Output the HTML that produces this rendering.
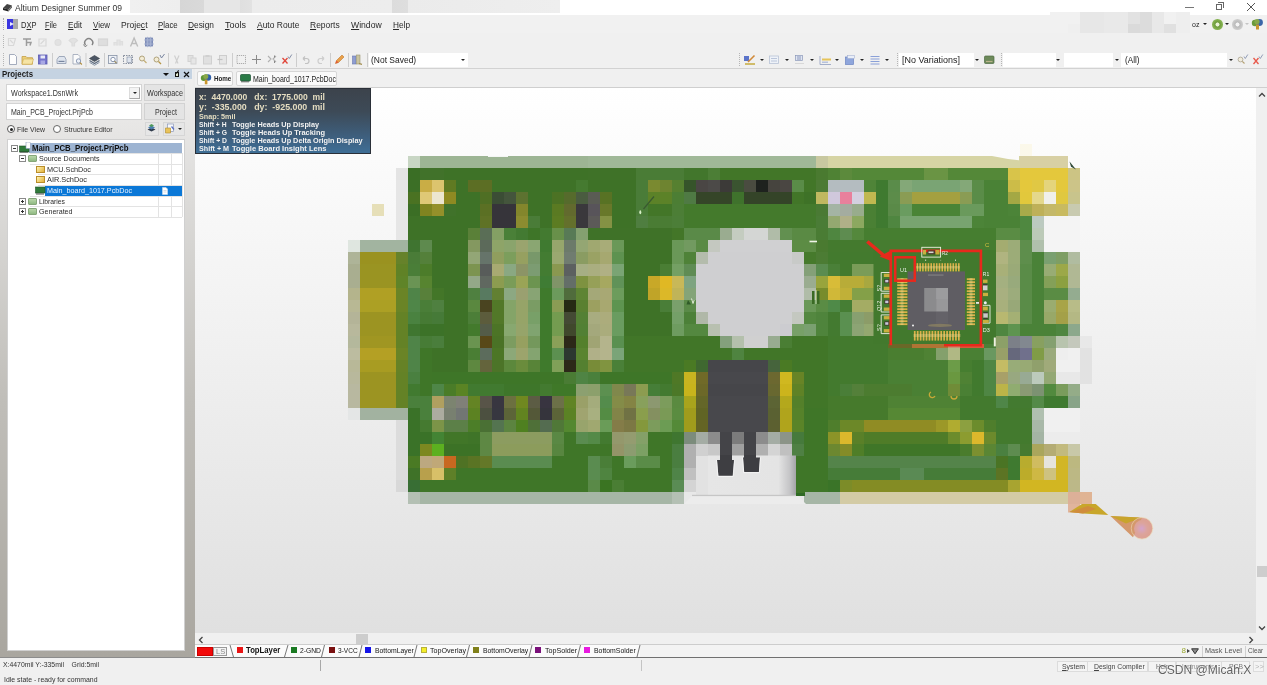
<!DOCTYPE html>
<html><head><meta charset="utf-8">
<style>
*{box-sizing:border-box;margin:0;padding:0}
html,body{width:1267px;height:685px;overflow:hidden;background:#f0f0f0;font-family:"Liberation Sans",sans-serif;font-size:8px;color:#222}
.abs,.abs div,.abs span,.abs svg,.abs i{position:absolute}
span{transform-origin:0 50%}
span{white-space:nowrap;line-height:1}
body>.abs{will-change:transform}
#title{left:0;top:0;width:1267px;height:15px;background:#fff}
#menubar{left:0;top:15px;width:1267px;height:18px;background:#f1f1f1}
#menubar span{top:4.5px;font-size:9.4px;color:#2a2a2a}
#menubar u{text-decoration:underline;text-underline-offset:1px}
#tb1{left:0;top:33px;width:1267px;height:17px;background:#f0f0f0}
#tb2{left:0;top:50px;width:1267px;height:19px;background:#f0f0f0;border-bottom:1px solid #d2d2d2}
.sep{width:1px;height:14px;top:3px;background:#cfcfcf}
.grip{width:2px;height:13px;top:3px;border-left:1px dotted #b5b5b5}
.combo{background:#fff;height:14px;top:3px}
.dd{width:0;height:0;border-left:2px solid transparent;border-right:2px solid transparent;border-top:2.5px solid #222}
#panel{left:0;top:69px;width:195px;height:589px;background:linear-gradient(#f0f0f0 0%,#e9e8e7 8%,#dcdbd9 22%,#c0beb9 56%,#a9a69f 100%);border-bottom:1px solid #8c8c8c}
#phead{left:0;top:69px;width:192px;height:10px;background:#c5d3e2}
#psplit{left:193px;top:69px;width:2px;height:20px;background:#ececec}
.tbox{background:#fff;border:1px solid #d4d4d4;font-size:8.2px;color:#333}
.btn{background:#e4e4e4;border:1px solid #d2d2d2;font-size:8.2px;color:#333;text-align:center}
#tree{left:7px;top:139px;width:178px;height:512px;background:#fff;border:1px solid #d0d0d0}
#tree span{font-size:8px;color:#2b2b2b}
.hl{height:1px;background:#e3e3e3}
.vl{width:1px;background:#e3e3e3}
.pm{width:7px;height:7px;border:1px solid #8a8a8a;background:#fff}
.pm:before{content:"";position:absolute;left:1px;top:2px;width:3px;height:1px;background:#333}
.pm.plus:after{content:"";position:absolute;left:2px;top:1px;width:1px;height:3px;background:#333}
.fold{width:9px;height:7px;background:linear-gradient(#b9d7a9,#8fb982);border:1px solid #86a67a;border-radius:1px}
.sch{width:9px;height:7px;background:linear-gradient(135deg,#fff3b0,#e2b13a);border:1px solid #b98d2a}
#tabbar{left:195px;top:69px;width:1072px;height:19px;background:#f0f0f0;border-bottom:1px solid #cfcfcf}
.tab{top:2px;height:15px;background:#fafafa;border:1px solid #d6d6d6;border-radius:2px}
.tab span{top:3px;font-size:8.3px;color:#222}
#canvas{left:195px;top:88px;width:1061px;height:545px;background:linear-gradient(#ffffff,#e0e0e0);overflow:hidden}
#vscroll{left:1256px;top:88px;width:11px;height:545px;background:#f0f0f0}
#hscroll{left:195px;top:633px;width:1072px;height:12px;background:#f0f0f0}
#layers{left:195px;top:644px;width:1072px;height:14px;background:#f3f3f3;border-bottom:1px solid #707070;border-top:1px solid #cdcdcd}
#layers span{top:1.8px;font-size:7.9px;color:#151515}
#layers i{top:2px;width:6px;height:6px}
#layers b.s{top:0;width:5px;height:12px;}
#status{left:0;top:658px;width:1267px;height:27px;background:#f0f0f0}
#status span{font-size:8px;color:#333}
.sbtn{top:3px;height:11px;border:1px solid #dcdcdc;background:#f4f4f4}
#hud{left:195px;top:88px;width:176px;height:66px;background:linear-gradient(#3c434c 0%,#3d4a57 35%,#3e6283 80%,#3f6f96 100%);border:1px solid #2a3038}
#hud span{font-weight:bold}
.y1{color:#e4dcc0;font-size:8.7px}
.y2{color:#e4dcc0;font-size:6.4px}
.w{color:#f2f2f2;font-size:7.3px}
</style></head><body>
<!-- TITLE -->
<div id="title" class="abs">
 <svg style="left:2px;top:2px" width="11" height="11" viewBox="0 0 11 11"><path d="M1 6 L5 2 L10 3.5 L6.5 7.5Z" fill="#444"/><path d="M1 6 L6.5 7.5 L6.5 9.5 L1 8Z" fill="#222"/><path d="M6.5 7.5 L10 3.5 L10 5.5 L6.5 9.5Z" fill="#666"/></svg>
 <span style="left:15px;top:3px;font-size:9.6px;color:#333;transform:scaleX(0.8919)">Altium Designer Summer 09</span>
 <div style="left:130px;top:0;width:430px;height:13px;background:linear-gradient(90deg,#f0f0f0 0,#eeeeee 50px,#d6d6d6 50px,#d9d9d9 74px,#e6e6e6 74px,#e6e6e6 110px,#dfdfdf 110px,#e2e2e2 122px,#ececec 122px,#ededed 262px,#dcdcdc 262px,#dedede 278px,#ebebeb 278px,#eeeeee 430px)"></div>
 <div style="left:1185px;top:7px;width:9px;height:1px;background:#777"></div>
 <div style="left:1216px;top:4px;width:6px;height:6px;border:1px solid #666"></div>
 <div style="left:1218px;top:2px;width:6px;height:6px;border-top:1px solid #666;border-right:1px solid #666"></div>
 <svg style="left:1246px;top:2px" width="10" height="10" viewBox="0 0 10 10"><path d="M1 1L9 9M9 1L1 9" stroke="#555" stroke-width="1"/></svg>
</div>
<!-- MENUBAR -->
<div id="menubar" class="abs">
 <div style="left:3px;top:3px;width:2px;height:12px;border-left:1px dotted #aaa"></div>
 <div style="left:7px;top:4px;width:6px;height:10px;background:#3a35e0"></div>
 <div style="left:13px;top:4px;width:5px;height:10px;background:#a8a8a8"></div>
 <div style="left:10px;top:7px;width:0;height:0;border-left:4px solid #e8e8ff;border-top:2.5px solid transparent;border-bottom:2.5px solid transparent"></div>
 <span style="left:20.5px;transform:scaleX(0.8026)">D<u>X</u>P</span>
 <span style="left:44.5px;transform:scaleX(0.7934)"><u>F</u>ile</span>
 <span style="left:67.5px;transform:scaleX(0.8657)"><u>E</u>dit</span>
 <span style="left:92.8px;transform:scaleX(0.8428)"><u>V</u>iew</span>
 <span style="left:120.8px;transform:scaleX(0.9079)">Proje<u>c</u>t</span>
 <span style="left:157.8px;transform:scaleX(0.8394)"><u>P</u>lace</span>
 <span style="left:188.4px;transform:scaleX(0.8903)"><u>D</u>esign</span>
 <span style="left:225px;transform:scaleX(0.9593)"><u>T</u>ools</span>
 <span style="left:257px;transform:scaleX(0.9036)"><u>A</u>uto Route</span>
 <span style="left:310.3px;transform:scaleX(0.9043)"><u>R</u>eports</span>
 <span style="left:351.3px;transform:scaleX(0.9203)"><u>W</u>indow</span>
 <span style="left:392.8px;transform:scaleX(0.8810)"><u>H</u>elp</span>
 <!-- blurred patch -->
 <div style="left:1050px;top:-3px;width:140px;height:24px;background:#f1f1f1"></div>
 <div style="left:1068px;top:9px;width:12px;height:12px;background:#efefef"></div>
 <div style="left:1080px;top:-3px;width:24px;height:24px;background:#e7e7e7"></div>
 <div style="left:1104px;top:-3px;width:24px;height:24px;background:#e9e9e9"></div>
 <div style="left:1128px;top:-3px;width:12px;height:12px;background:#e2e2e2"></div>
 <div style="left:1128px;top:9px;width:12px;height:12px;background:#dadada"></div>
 <div style="left:1140px;top:-3px;width:12px;height:24px;background:#dcdcdc"></div>
 <div style="left:1152px;top:-3px;width:12px;height:24px;background:#e8e8e8"></div>
 <div style="left:1164px;top:9px;width:12px;height:12px;background:#e0e0e0"></div>
 <div style="left:1176px;top:-3px;width:14px;height:24px;background:#eeeeee"></div>
 <span style="left:1192px;top:6px;font-size:7px;color:#222">oz</span>
 <div class="dd" style="left:1203px;top:8px"></div>
 <div style="left:1212px;top:4px;width:10.5px;height:10.5px;border-radius:50%;background:radial-gradient(circle at 50% 50%,#e9f2d8 0 22%,#6d9a3a 30%,#8ab756 70%,#6c9440 100%)"></div>
 <div class="dd" style="left:1225px;top:8px"></div>
 <div style="left:1232px;top:4px;width:10.5px;height:10.5px;border-radius:50%;background:radial-gradient(circle at 50% 50%,#f4f4f4 0 22%,#b9b9b9 30%,#cfcfcf 70%,#b5b5b5 100%)"></div>
 <div class="dd" style="left:1245px;top:8px;border-top-color:#c4c4c4"></div>
 <svg style="left:1251px;top:3px" width="13" height="12" viewBox="0 0 13 12"><circle cx="4" cy="5" r="3.2" fill="#6a9a3a"/><circle cx="8.5" cy="4.5" r="3.4" fill="#3a66a8"/><circle cx="6" cy="3.6" r="2.6" fill="#86a84a"/><rect x="5" y="6.5" width="3" height="5" fill="#c9962e"/></svg>
</div>
<!-- TOOLBAR 1 -->
<div id="tb1" class="abs">
 <div class="grip" style="left:3px;top:2px"></div>
 <svg style="left:7px;top:3px" width="150" height="12" viewBox="0 0 150 12">
  <g fill="none" stroke="#d8d8d8" stroke-width="1.2">
   <path d="M1.5 2.5h7l-2 7h-5z M3 4l3 3"/>
   <path d="M16 3h8M19.5 3v7M20 6.5h4l-1 3" stroke="#9c9c9c" stroke-width="1.5"/>
   <path d="M32 3h7v7h-7z M33.5 8l4-4"/>
   <circle cx="51" cy="6.5" r="3" fill="#e2e2e2" stroke="#dedede"/>
   <path d="M62 4.5c2-3 7-3 8.5 0l-3 2.5v3h-2.500v-3z" fill="#e2e2e2" stroke="#dcdcdc"/>
   <path d="M78.500 9a4 4 0 1 1 6.500 0" stroke="#858585" stroke-width="1.500"/>
   <path d="M76.500 8.500l1.500 2.200 2.300-1.500" stroke="#858585" stroke-width="1"/>
   <rect x="91.500" y="3" width="9" height="6.500" fill="#dedede" stroke="#d6d6d6"/>
   <path d="M107 9.500v-3h3v3M110 9.500v-5.500h3v5.500M113 9.500v-4h2.500v4" fill="#e4e4e4" stroke="#dedede"/>
   <path d="M123.500 10.500l3.600-8.500 3.600 8.500M124.800 7.500h4.800" stroke="#bdbdbd" stroke-width="1.400"/>
  </g>
  <rect x="138.500" y="2" width="7" height="8" fill="#8f9dc4" stroke="#6e7fb0" stroke-width=".8"/>
  <path d="M137 4h10M137 8h10M140.500 .8v10.400M143.500 .8v10.400" stroke="#a7b2d2" stroke-width=".8"/>
 </svg>
</div>
<!-- TOOLBAR 2 -->
<div id="tb2" class="abs">
 <div class="grip" style="left:3px"></div>
 <svg style="left:0;top:0" width="370" height="18" viewBox="0 0 370 18">
  <!-- new -->
  <path d="M9.500 4.500h5l2 2v8h-7z" fill="#fdfdfd" stroke="#9aa3b5" stroke-width=".9"/>
  <!-- open -->
  <path d="M22 6.500h4l1 1.200h5.500v6.500h-10.500z" fill="#ecd07a" stroke="#c4a048" stroke-width=".8"/><path d="M23.500 9h10l-1.500 5.200h-10z" fill="#f6e4a4" stroke="#ccaa50" stroke-width=".6"/>
  <!-- save -->
  <rect x="38.500" y="5" width="8.500" height="9" fill="#7674cc" stroke="#5a5ab0" stroke-width=".8"/><rect x="40.500" y="5.500" width="4.500" height="3" fill="#e8eaf8"/><rect x="40.500" y="10.500" width="4.500" height="3.500" fill="#a8a8e4"/>
  <path d="M52.500 3v14M86 3v14M104.500 3v14M168.500 3v14M232.500 3v14M296.500 3v14M330.500 3v14M348.500 3v14M367.500 3v14" stroke="#cdcdcd" stroke-width="1"/>
  <!-- print -->
  <path d="M57 9.500l2-3h5.500l1.500 3v4h-9z" fill="#dfe5ee" stroke="#8c98ad" stroke-width=".8"/><rect x="58.500" y="10.800" width="6" height="1.200" fill="#7886a0"/>
  <!-- preview -->
  <path d="M73 4.500h5l2 2v7.500h-7z" fill="#fbfbfb" stroke="#9aa3b5" stroke-width=".8"/><circle cx="78.500" cy="11" r="2.200" fill="#e9eef6" stroke="#7a8aa8" stroke-width=".8"/><path d="M80 12.700l1.800 1.800" stroke="#b08a3a" stroke-width="1.200"/>
  <!-- layers -->
  <path d="M89.500 8.500l5-3 5 3-5 3z" fill="#4c5664" stroke="#2f3742" stroke-width=".6"/><path d="M89.500 10.500l5 3 5-3" fill="none" stroke="#5d6a7c" stroke-width="1.200"/><path d="M89.500 12.300l5 3 5-3" fill="none" stroke="#8794a6" stroke-width="1"/>
  <!-- zoom area icons -->
  <rect x="108.500" y="5.500" width="8.500" height="8" fill="#eef1f6" stroke="#8792a6" stroke-width=".8"/><circle cx="113" cy="9.500" r="2.200" fill="#fff" stroke="#6f7f9c" stroke-width=".8"/><path d="M114.500 11.200l2 2" stroke="#8c7a4a" stroke-width="1.100"/>
  <rect x="123.500" y="5.500" width="9" height="8" fill="none" stroke="#707a8c" stroke-width=".8" stroke-dasharray="1.500 1"/><rect x="127" y="7" width="4.500" height="5.500" fill="#dfe5ee" stroke="#7f8aa0" stroke-width=".6"/>
  <circle cx="142" cy="8.500" r="2.500" fill="#f3ecd5" stroke="#a89a70" stroke-width=".9"/><path d="M144 10.500l2.500 2.500" stroke="#c4b078" stroke-width="1.300"/>
  <circle cx="156.500" cy="9.500" r="2.500" fill="#f3ecd5" stroke="#a89a70" stroke-width=".9"/><path d="M158.500 11.500l2.500 2.500" stroke="#b59645" stroke-width="1.300"/><path d="M160 5l1.500 3 3-4" fill="none" stroke="#7a86a0" stroke-width="1"/>
  <!-- greyed cut/copy/paste -->
  <path d="M174.500 5.500l3.500 8M179 5.500l-3.500 8" stroke="#cfcfcf" stroke-width="1.200"/>
  <rect x="188" y="5.500" width="5" height="6" fill="#e2e2e2" stroke="#d2d2d2"/><rect x="191" y="8" width="5" height="6" fill="#e6e6e6" stroke="#d2d2d2"/>
  <rect x="203.500" y="6" width="8" height="8" fill="#e0e0e0" stroke="#d0d0d0"/><rect x="205.500" y="5" width="4" height="2" fill="#d0d0d0"/>
  <rect x="219.500" y="5.500" width="7" height="8.500" fill="#e6e6e6" stroke="#cdcdcd"/><path d="M217.500 9.500h5" stroke="#c2c2c2" stroke-width="1.200"/>
  <!-- select rect -->
  <rect x="237" y="5.500" width="8.500" height="8" fill="none" stroke="#9a9a9a" stroke-width=".8" stroke-dasharray="1.200 .8"/>
  <path d="M256.500 5v9M252 9.500h9" stroke="#8a8a8a" stroke-width="1"/>
  <path d="M268 6l3 3-3 3M276 6l-3 3 3 3" fill="none" stroke="#b0b0b0" stroke-width="1.100"/><path d="M274.500 5.500v2M274.500 11v2" stroke="#888" stroke-width="1"/>
  <path d="M282.500 8l5 5.500M287.500 8l-5 5.500" stroke="#e0463a" stroke-width="1.300"/><path d="M288 6.500l1.300 2 2.500-4" fill="none" stroke="#7a86a0" stroke-width=".9"/>
  <!-- undo/redo -->
  <path d="M303 8.500h3.500a2 2 0 0 1 0 5h-1.500M303 8.500l2-2M303 8.500l2 2" fill="none" stroke="#c2c2c2" stroke-width="1.200"/>
  <path d="M324 8.500h-3.500a2 2 0 0 0 0 5h1.500M324 8.500l-2-2M324 8.500l-2 2" fill="none" stroke="#cdcdcd" stroke-width="1.200"/>
  <!-- pencil -->
  <path d="M335.500 13.500l1-3 5.500-5.500 2 2-5.500 5.500z" fill="#e8a04a" stroke="#c4782a" stroke-width=".6"/><path d="M335.500 13.500l1-3 2 2z" fill="#e05a3a"/>
  <!-- binocular/books -->
  <rect x="352.500" y="6" width="3.500" height="8" fill="#8f9dd0" stroke="#6a78b0" stroke-width=".6"/><rect x="356.500" y="5" width="3.500" height="9" fill="#c9c3a0" stroke="#9a946e" stroke-width=".6"/><path d="M359 13.500l3 .8" stroke="#a08a4a" stroke-width="1.200"/>
 </svg>
 <div class="combo" style="left:369px;width:99px"></div>
 <span style="left:370.8px;top:6px;font-size:8.6px;color:#222;transform:scaleX(0.9856)">(Not Saved)</span>
 <div class="dd" style="left:461px;top:9px"></div>
 <!-- right group -->
 <div class="grip" style="left:739px"></div>
 <svg style="left:740px;top:0" width="260" height="18" viewBox="0 0 260 18">
  <rect x="4" y="6" width="5" height="5" fill="#5b74c9"/><path d="M5 14h10" stroke="#c9b04a" stroke-width="1.600"/><path d="M8 12l6.500-6.500" stroke="#d08a3a" stroke-width="1.600"/>
  <rect x="29.500" y="6" width="9" height="7.500" fill="#eef2f8" stroke="#b8c3d6" stroke-width=".8"/><path d="M31 8.500h6M31 11h6" stroke="#b3bfd6" stroke-width=".9"/>
  <rect x="55.500" y="5.500" width="7" height="5" fill="#dfe5f2" stroke="#8a97b8" stroke-width=".7"/><path d="M57 7h4M57 9h4" stroke="#6c7aa6" stroke-width=".7"/><path d="M55 13.500h9" stroke="#d8d8d8" stroke-width="1"/>
  <path d="M80 6v8.500h11" fill="none" stroke="#9aa6c4" stroke-width=".9"/><rect x="82" y="8.500" width="9" height="2" fill="#e6c45a"/><rect x="82" y="11.500" width="6" height="1.500" fill="#b7c2dc"/>
  <rect x="105.500" y="7" width="8" height="7.500" fill="#8fa6dc" stroke="#6c84c0" stroke-width=".7"/><rect x="107.500" y="5.500" width="7" height="3" fill="#e9eef8" stroke="#9aa8cc" stroke-width=".5"/>
  <path d="M130.500 6.500h9M130.500 9h9M130.500 11.500h9M130.500 14h9" stroke="#8aa0d8" stroke-width="1.200"/>
  <rect x="244.500" y="6" width="9.500" height="7.500" rx="1" fill="#6d8a5a" stroke="#4e6a42" stroke-width=".7"/><path d="M246 11.500h6.500" stroke="#b9b38a" stroke-width="1.200"/>
 </svg>
 <div class="dd" style="left:760px;top:9px"></div>
 <div class="dd" style="left:784.500px;top:9px"></div>
 <div class="dd" style="left:810px;top:9px"></div>
 <div class="dd" style="left:835px;top:9px"></div>
 <div class="dd" style="left:860px;top:9px"></div>
 <div class="dd" style="left:885.300px;top:9px"></div>
 <div class="grip" style="left:896.500px"></div>
 <div class="combo" style="left:898.500px;width:75px"></div>
 <span style="left:901.500px;top:6px;font-size:8.600px;color:#222;transform:scaleX(1.0407)">[No Variations]</span>
 <div class="dd" style="left:974.700px;top:9px"></div>
 <div class="grip" style="left:1001px"></div>
 <div class="combo" style="left:1003px;width:53px"></div>
 <div class="dd" style="left:1056px;top:9px"></div>
 <div class="combo" style="left:1064px;width:49px"></div>
 <div class="dd" style="left:1115.200px;top:9px"></div>
 <div class="combo" style="left:1121px;width:106px"></div>
 <span style="left:1124.500px;top:6px;font-size:8.600px;color:#222;transform:scaleX(0.9489)">(All)</span>
 <div class="dd" style="left:1228.500px;top:9px"></div>
 <svg style="left:1236px;top:2px" width="30" height="15" viewBox="0 0 30 15"><circle cx="4.500" cy="7.500" r="2.400" fill="#f1ecdc" stroke="#a9a290" stroke-width=".8"/><path d="M6.300 9.300l2.200 2.200" stroke="#b3a070" stroke-width="1.100"/><path d="M8 4.500l1.300 2 2.500-4" fill="none" stroke="#8894b0" stroke-width=".9"/>
 <path d="M17.500 6l5 6M22.500 6l-5 6" stroke="#e8584a" stroke-width="1.300"/><path d="M23 4.500l1.300 2 2.500-4" fill="none" stroke="#8894b0" stroke-width=".9"/></svg>
</div>
<!-- PANEL -->
<div id="panel" class="abs"></div>
<div id="psplit" class="abs"></div>
<div id="phead" class="abs">
 <span style="left:1.500px;top:1px;font-size:8.600px;font-weight:bold;color:#1c1c1c;transform:scaleX(0.9139)">Projects</span>
 <div class="dd" style="left:163px;top:3.500px;border-left-width:3px;border-right-width:3px;border-top-width:3.500px;border-top-color:#111"></div>
 <div style="left:174.500px;top:2.500px;width:4.500px;height:5px;border:1px solid #111;background:#dfe8cf"></div><div style="left:177px;top:1px;width:1px;height:4px;background:#111;transform:rotate(35deg)"></div>
 <svg style="left:183px;top:1.500px" width="7" height="7" viewBox="0 0 7 7"><path d="M1 1l5 5M6 1l-5 5" stroke="#111" stroke-width="1.200"/></svg>
</div>
<div class="abs tbox" style="left:6px;top:84px;width:136px;height:17px"><span style="left:3.500px;top:4.500px;transform:scaleX(0.8747)">Workspace1.DsnWrk</span>
 <div style="left:122px;top:2px;width:11px;height:12px;background:#f4f4f4;border:1px solid #dcdcdc;border-right-color:#a8a8a8;border-bottom-color:#a8a8a8"></div><div class="dd" style="left:126px;top:7px"></div></div>
<div class="abs btn" style="left:144px;top:84px;width:41px;height:17px"><span style="left:2px;top:4.500px;transform:scaleX(0.8821)">Workspace</span></div>
<div class="abs tbox" style="left:6px;top:103px;width:136px;height:17px"><span style="left:4px;top:4.500px;transform:scaleX(0.8581)">Main_PCB_Project.PrjPcb</span></div>
<div class="abs btn" style="left:144px;top:103px;width:41px;height:17px"><span style="left:9.500px;top:4.500px;transform:scaleX(0.8633)">Project</span></div>
<div class="abs" style="left:0;top:122px;width:192px;height:14px">
 <div style="left:7px;top:3px;width:8px;height:8px;border-radius:50%;border:1px solid #555;background:#fff"></div><div style="left:9.500px;top:5.500px;width:3px;height:3px;border-radius:50%;background:#222"></div>
 <span style="left:17px;top:3.500px;font-size:8px;color:#333;transform:scaleX(0.8665)">File View</span>
 <div style="left:52.500px;top:3px;width:8px;height:8px;border-radius:50%;border:1px solid #666;background:#fff"></div>
 <span style="left:63.500px;top:3.500px;font-size:8px;color:#333;transform:scaleX(0.8726)">Structure Editor</span>
 <div style="left:144.500px;top:0;width:14px;height:13.500px;background:#e6e6e6;border:1px solid #d6d6d6"></div>
 <svg style="left:146px;top:1px" width="11" height="11" viewBox="0 0 11 11"><path d="M1.500 6.500l4-2 4 2-4 2z" fill="#2f3a4a"/><path d="M2 4.500l3.500-2 3.500 2-3.500 2z" fill="#4a7fb0"/><path d="M3 2.500l2.500-1.500 2.500 1.500-2.500 1.500z" fill="#4f9a5a"/></svg>
 <div style="left:162.500px;top:0;width:22px;height:13.500px;background:#e6e6e6;border:1px solid #d6d6d6"></div>
 <svg style="left:164px;top:1px" width="12" height="11" viewBox="0 0 12 11"><rect x="3.500" y="1" width="6" height="7.500" fill="#f6f8fc" stroke="#8c98b8" stroke-width=".7"/><path d="M1.500 5h5v5h-5z" fill="#e9c35a" stroke="#b08a2c" stroke-width=".6"/><path d="M7.500 3.500l2.500 3" stroke="#5a70c0" stroke-width="1.200"/></svg>
 <div class="dd" style="left:177.500px;top:5.500px"></div>
</div>
<div id="tree" class="abs">
 <!-- coordinates relative to tree (abs x-8, y-140) -->
 <div style="left:20.500px;top:3px;width:153.500px;height:10px;background:#9db4d2"></div>
 <div style="left:37px;top:45px;width:137px;height:10.500px;background:#0b78d7"></div>
 <div class="hl" style="left:22px;top:13px;width:152px"></div>
 <div class="hl" style="left:22px;top:23.500px;width:152px"></div>
 <div class="hl" style="left:30px;top:34px;width:144px"></div>
 <div class="hl" style="left:30px;top:44.500px;width:144px"></div>
 <div class="hl" style="left:22px;top:55.500px;width:152px"></div>
 <div class="hl" style="left:22px;top:66px;width:152px"></div>
 <div class="hl" style="left:22px;top:76.500px;width:152px"></div>
 <div class="vl" style="left:150px;top:13px;height:32px"></div><div class="vl" style="left:150px;top:55.500px;height:21px"></div>
 <div class="vl" style="left:162.500px;top:13px;height:32px"></div><div class="vl" style="left:162.500px;top:55.500px;height:21px"></div>
 <div class="vl" style="left:173.500px;top:13px;height:64px"></div>
 <div class="pm" style="left:2.500px;top:4.500px"></div>
 <div class="pm" style="left:11px;top:15px"></div>
 <div class="pm plus" style="left:11px;top:57.500px"></div>
 <div class="pm plus" style="left:11px;top:68px"></div>
 <svg style="left:10.500px;top:2px" width="12" height="12" viewBox="0 0 12 12"><rect x=".5" y="4" width="9.500" height="6" fill="#2f7a3a" stroke="#1f5628" stroke-width=".6"/><path d="M2 9.500v1.500M4 9.500v1.500M6 9.500v1.500M8 9.500v1.500" stroke="#222" stroke-width=".8"/><path d="M7 0h3.500l1 1v5.500h-4.500z" fill="#fff" stroke="#8898b8" stroke-width=".6"/></svg>
 <div class="fold" style="left:19.500px;top:15px"></div>
 <div class="fold" style="left:19.500px;top:57.500px"></div>
 <div class="fold" style="left:19.500px;top:68px"></div>
 <div class="sch" style="left:27.500px;top:25.500px"></div>
 <div class="sch" style="left:27.500px;top:36px"></div>
 <svg style="left:26.500px;top:45.500px" width="11" height="10" viewBox="0 0 11 10"><rect x=".5" y="1" width="9.500" height="6" fill="#2f7a3a" stroke="#1f5628" stroke-width=".6"/><path d="M2 7v2M4 7v2M6 7v2M8 7v2" stroke="#222" stroke-width=".8"/></svg>
 <span style="left:23.500px;top:4.800px;font-weight:bold;color:#111;font-size:8.200px;transform:scaleX(0.9553)">Main_PCB_Project.PrjPcb</span>
 <span style="left:31px;top:15px;transform:scaleX(0.8893)">Source Documents</span>
 <span style="left:39px;top:25.500px;transform:scaleX(0.9081)">MCU.SchDoc</span>
 <span style="left:39px;top:36px;transform:scaleX(0.9179)">AIR.SchDoc</span>
 <span style="left:39px;top:46.500px;color:#eaf3ff;transform:scaleX(0.8972)">Main_board_1017.PcbDoc</span>
 <span style="left:31px;top:57.500px;transform:scaleX(0.8473)">Libraries</span>
 <span style="left:31px;top:68px;transform:scaleX(0.8860)">Generated</span>
 <svg style="left:153.500px;top:46.500px" width="6" height="8" viewBox="0 0 6 8"><path d="M.5 .5h3.500l1.500 1.500v5.500h-5z" fill="#fff" stroke="#c8dcf0" stroke-width=".6"/><path d="M1.500 3.500h3M1.500 5h3" stroke="#b8c4d0" stroke-width=".6"/></svg>
</div>
<!-- TABBAR -->
<div id="tabbar" class="abs">
 <div class="tab" style="left:2px;width:36px">
  <svg style="left:2px;top:1px" width="12" height="12" viewBox="0 0 12 12"><circle cx="3.800" cy="5" r="3" fill="#5f9634"/><circle cx="8" cy="4.500" r="3.200" fill="#2f5fa8"/><circle cx="5.800" cy="3.400" r="2.500" fill="#8aa84a"/><rect x="4.800" y="6.500" width="2.600" height="4.800" fill="#c9962e"/></svg>
  <span style="left:15.500px;color:#222;font-weight:bold;font-size:7.800px;transform:scaleX(0.7983)">Home</span></div>
 <div class="tab" style="left:41px;width:100.500px">
  <svg style="left:2.500px;top:2px" width="12" height="10" viewBox="0 0 12 10"><rect x=".5" y=".5" width="10" height="6.500" rx="1" fill="#2a7a46" stroke="#175030" stroke-width=".7"/><path d="M2 7v1.500M4 7v1.500M6 7v1.500M8 7v1.500" stroke="#222" stroke-width=".8"/></svg>
  <span style="left:16px;transform:scaleX(0.8448)">Main_board_1017.PcbDoc</span></div>
</div>
<div id="canvas" class="abs">
<svg style="left:0;top:0" width="1061" height="545" viewBox="195 88 1061 545" shape-rendering="crispEdges">
<rect x="408" y="156" width="12" height="12" fill="#c8d6c4"/>
<rect x="420" y="156" width="168" height="12" fill="#9db594"/>
<rect x="588" y="156" width="228" height="12" fill="#a0b898"/>
<rect x="816" y="156" width="12" height="12" fill="#c8c8a0"/>
<rect x="828" y="156" width="192" height="12" fill="#d6d4a4"/>
<rect x="1020" y="156" width="48" height="12" fill="#d8d0a4"/>
<rect x="396" y="168" width="12" height="12" fill="#e4e4e4"/>
<rect x="408" y="168" width="12" height="12" fill="#3a6e25"/>
<rect x="420" y="168" width="24" height="12" fill="#41722a"/>
<rect x="444" y="168" width="144" height="12" fill="#3e7227"/>
<rect x="588" y="168" width="48" height="12" fill="#3f7228"/>
<rect x="636" y="168" width="48" height="12" fill="#4a7c36"/>
<rect x="684" y="168" width="24" height="12" fill="#42762c"/>
<rect x="708" y="168" width="12" height="12" fill="#4c7e36"/>
<rect x="720" y="168" width="96" height="12" fill="#427628"/>
<rect x="816" y="168" width="12" height="12" fill="#4a7a30"/>
<rect x="828" y="168" width="12" height="12" fill="#4f8234"/>
<rect x="840" y="168" width="12" height="12" fill="#5c8a3c"/>
<rect x="852" y="168" width="72" height="12" fill="#548838"/>
<rect x="924" y="168" width="24" height="12" fill="#6a9444"/>
<rect x="948" y="168" width="60" height="12" fill="#548838"/>
<rect x="1008" y="168" width="12" height="12" fill="#d8c44a"/>
<rect x="1020" y="168" width="48" height="12" fill="#e4c83c"/>
<rect x="1068" y="168" width="12" height="12" fill="#ccc484"/>
<rect x="396" y="180" width="12" height="12" fill="#e6e6e6"/>
<rect x="408" y="180" width="12" height="12" fill="#3c6f26"/>
<rect x="420" y="180" width="12" height="12" fill="#c9ad45"/>
<rect x="432" y="180" width="12" height="12" fill="#dcc46e"/>
<rect x="444" y="180" width="12" height="12" fill="#5f7a22"/>
<rect x="456" y="180" width="12" height="12" fill="#3e7227"/>
<rect x="468" y="180" width="24" height="12" fill="#5c6e24"/>
<rect x="492" y="180" width="84" height="12" fill="#3e7227"/>
<rect x="576" y="180" width="12" height="12" fill="#457a30"/>
<rect x="588" y="180" width="48" height="12" fill="#3e7227"/>
<rect x="636" y="180" width="12" height="12" fill="#4a7c38"/>
<rect x="648" y="180" width="12" height="12" fill="#7a8a30"/>
<rect x="660" y="180" width="12" height="12" fill="#6e8430"/>
<rect x="672" y="180" width="12" height="12" fill="#568030"/>
<rect x="684" y="180" width="12" height="12" fill="#36542a"/>
<rect x="696" y="180" width="12" height="12" fill="#4a4644"/>
<rect x="708" y="180" width="12" height="12" fill="#4c4a48"/>
<rect x="720" y="180" width="12" height="12" fill="#3c3a38"/>
<rect x="732" y="180" width="12" height="12" fill="#3a5430"/>
<rect x="744" y="180" width="12" height="12" fill="#4a4c40"/>
<rect x="756" y="180" width="12" height="12" fill="#1e221e"/>
<rect x="768" y="180" width="12" height="12" fill="#46443e"/>
<rect x="780" y="180" width="12" height="12" fill="#4a4642"/>
<rect x="792" y="180" width="12" height="12" fill="#5a8c48"/>
<rect x="804" y="180" width="12" height="12" fill="#427628"/>
<rect x="816" y="180" width="12" height="12" fill="#4c7a34"/>
<rect x="828" y="180" width="36" height="12" fill="#b4bcc0"/>
<rect x="864" y="180" width="12" height="12" fill="#4f8438"/>
<rect x="876" y="180" width="12" height="12" fill="#3f7a30"/>
<rect x="888" y="180" width="12" height="12" fill="#5a8c4a"/>
<rect x="900" y="180" width="12" height="12" fill="#84a878"/>
<rect x="912" y="180" width="48" height="12" fill="#7aa474"/>
<rect x="960" y="180" width="12" height="12" fill="#84a878"/>
<rect x="972" y="180" width="12" height="12" fill="#5a8c48"/>
<rect x="984" y="180" width="24" height="12" fill="#4a8236"/>
<rect x="1008" y="180" width="12" height="12" fill="#ccbc48"/>
<rect x="1020" y="180" width="12" height="12" fill="#e4c83c"/>
<rect x="1032" y="180" width="12" height="12" fill="#e0c844"/>
<rect x="1044" y="180" width="12" height="12" fill="#e4d47c"/>
<rect x="1056" y="180" width="12" height="12" fill="#e4c83c"/>
<rect x="1068" y="180" width="12" height="12" fill="#ccc488"/>
<rect x="396" y="192" width="12" height="12" fill="#e6e6e6"/>
<rect x="408" y="192" width="12" height="12" fill="#4a7222"/>
<rect x="420" y="192" width="12" height="12" fill="#dfc876"/>
<rect x="432" y="192" width="12" height="12" fill="#ece6d0"/>
<rect x="444" y="192" width="12" height="12" fill="#8e8a22"/>
<rect x="456" y="192" width="24" height="12" fill="#3e7227"/>
<rect x="480" y="192" width="12" height="12" fill="#4f6f24"/>
<rect x="492" y="192" width="12" height="12" fill="#3b4d35"/>
<rect x="504" y="192" width="12" height="12" fill="#44553c"/>
<rect x="516" y="192" width="12" height="12" fill="#5d7230"/>
<rect x="528" y="192" width="24" height="12" fill="#3e7227"/>
<rect x="552" y="192" width="12" height="12" fill="#4c7224"/>
<rect x="564" y="192" width="12" height="12" fill="#566b2c"/>
<rect x="576" y="192" width="12" height="12" fill="#4a5c40"/>
<rect x="588" y="192" width="12" height="12" fill="#5a5c54"/>
<rect x="600" y="192" width="12" height="12" fill="#587224"/>
<rect x="612" y="192" width="24" height="12" fill="#3e7227"/>
<rect x="636" y="192" width="12" height="12" fill="#4a7c38"/>
<rect x="648" y="192" width="24" height="12" fill="#5c8228"/>
<rect x="672" y="192" width="12" height="12" fill="#4c7e34"/>
<rect x="684" y="192" width="12" height="12" fill="#4f7a44"/>
<rect x="696" y="192" width="36" height="12" fill="#354528"/>
<rect x="732" y="192" width="12" height="12" fill="#3f722c"/>
<rect x="744" y="192" width="48" height="12" fill="#344428"/>
<rect x="792" y="192" width="12" height="12" fill="#427628"/>
<rect x="804" y="192" width="12" height="12" fill="#3e7227"/>
<rect x="816" y="192" width="12" height="12" fill="#c0b860"/>
<rect x="828" y="192" width="12" height="12" fill="#d0c8dc"/>
<rect x="840" y="192" width="12" height="12" fill="#e8809c"/>
<rect x="852" y="192" width="12" height="12" fill="#d4d0e0"/>
<rect x="864" y="192" width="12" height="12" fill="#c0b850"/>
<rect x="876" y="192" width="12" height="12" fill="#3f7a30"/>
<rect x="888" y="192" width="12" height="12" fill="#5c8c4a"/>
<rect x="900" y="192" width="12" height="12" fill="#8a9c54"/>
<rect x="912" y="192" width="48" height="12" fill="#a4a040"/>
<rect x="960" y="192" width="12" height="12" fill="#8a9c54"/>
<rect x="972" y="192" width="12" height="12" fill="#5a8c48"/>
<rect x="984" y="192" width="24" height="12" fill="#4a8236"/>
<rect x="1008" y="192" width="12" height="12" fill="#a4a844"/>
<rect x="1020" y="192" width="12" height="12" fill="#e2c83c"/>
<rect x="1032" y="192" width="12" height="12" fill="#e4d88c"/>
<rect x="1044" y="192" width="12" height="12" fill="#f0f0ec"/>
<rect x="1056" y="192" width="12" height="12" fill="#e0c840"/>
<rect x="1068" y="192" width="12" height="12" fill="#c8c48c"/>
<rect x="372" y="204" width="12" height="12" fill="#e6dfb8"/>
<rect x="396" y="204" width="12" height="12" fill="#e6e6e6"/>
<rect x="408" y="204" width="12" height="12" fill="#3b6e25"/>
<rect x="420" y="204" width="12" height="12" fill="#7f8420"/>
<rect x="432" y="204" width="12" height="12" fill="#94902a"/>
<rect x="444" y="204" width="12" height="12" fill="#40722a"/>
<rect x="456" y="204" width="24" height="12" fill="#3e7227"/>
<rect x="480" y="204" width="12" height="12" fill="#5b7024"/>
<rect x="492" y="204" width="24" height="12" fill="#36343a"/>
<rect x="516" y="204" width="12" height="12" fill="#83862c"/>
<rect x="528" y="204" width="24" height="12" fill="#3e7227"/>
<rect x="552" y="204" width="12" height="12" fill="#5a7a22"/>
<rect x="564" y="204" width="12" height="12" fill="#626a2e"/>
<rect x="576" y="204" width="12" height="12" fill="#3a383c"/>
<rect x="588" y="204" width="12" height="12" fill="#58545a"/>
<rect x="600" y="204" width="12" height="12" fill="#68782a"/>
<rect x="612" y="204" width="24" height="12" fill="#3e7227"/>
<rect x="636" y="204" width="12" height="12" fill="#4a7c38"/>
<rect x="648" y="204" width="24" height="12" fill="#437628"/>
<rect x="672" y="204" width="12" height="12" fill="#4c7e36"/>
<rect x="684" y="204" width="132" height="12" fill="#447a2c"/>
<rect x="816" y="204" width="12" height="12" fill="#4a7a34"/>
<rect x="828" y="204" width="12" height="12" fill="#a4b4a4"/>
<rect x="840" y="204" width="12" height="12" fill="#a4aca0"/>
<rect x="852" y="204" width="12" height="12" fill="#98ac8c"/>
<rect x="864" y="204" width="12" height="12" fill="#4a8034"/>
<rect x="876" y="204" width="12" height="12" fill="#3f7a30"/>
<rect x="888" y="204" width="12" height="12" fill="#5a8a48"/>
<rect x="900" y="204" width="12" height="12" fill="#6a9c60"/>
<rect x="912" y="204" width="48" height="12" fill="#4a8436"/>
<rect x="960" y="204" width="24" height="12" fill="#6a9a5c"/>
<rect x="984" y="204" width="24" height="12" fill="#4a8236"/>
<rect x="1008" y="204" width="12" height="12" fill="#4c8438"/>
<rect x="1020" y="204" width="12" height="12" fill="#a8aa4a"/>
<rect x="1032" y="204" width="12" height="12" fill="#beb058"/>
<rect x="1044" y="204" width="12" height="12" fill="#c4b868"/>
<rect x="1056" y="204" width="12" height="12" fill="#c8ba60"/>
<rect x="1068" y="204" width="12" height="12" fill="#c8cab0"/>
<rect x="396" y="216" width="12" height="12" fill="#e6e6e6"/>
<rect x="408" y="216" width="72" height="12" fill="#3e7227"/>
<rect x="480" y="216" width="12" height="12" fill="#5f7226"/>
<rect x="492" y="216" width="24" height="12" fill="#36343a"/>
<rect x="516" y="216" width="12" height="12" fill="#8c8c30"/>
<rect x="528" y="216" width="12" height="12" fill="#4a7c38"/>
<rect x="540" y="216" width="12" height="12" fill="#3e7227"/>
<rect x="552" y="216" width="12" height="12" fill="#5c7c22"/>
<rect x="564" y="216" width="12" height="12" fill="#64702c"/>
<rect x="576" y="216" width="12" height="12" fill="#3a383c"/>
<rect x="588" y="216" width="12" height="12" fill="#5c5a58"/>
<rect x="600" y="216" width="12" height="12" fill="#849244"/>
<rect x="612" y="216" width="24" height="12" fill="#3e7227"/>
<rect x="636" y="216" width="12" height="12" fill="#4f7e40"/>
<rect x="648" y="216" width="24" height="12" fill="#4a7c34"/>
<rect x="672" y="216" width="12" height="12" fill="#4c7e38"/>
<rect x="684" y="216" width="132" height="12" fill="#447a2c"/>
<rect x="816" y="216" width="12" height="12" fill="#4a7c36"/>
<rect x="828" y="216" width="12" height="12" fill="#94a870"/>
<rect x="840" y="216" width="12" height="12" fill="#b0b088"/>
<rect x="852" y="216" width="12" height="12" fill="#8ca860"/>
<rect x="864" y="216" width="12" height="12" fill="#4a8034"/>
<rect x="876" y="216" width="12" height="12" fill="#3f7a30"/>
<rect x="888" y="216" width="12" height="12" fill="#4f8640"/>
<rect x="900" y="216" width="72" height="12" fill="#78a470"/>
<rect x="972" y="216" width="12" height="12" fill="#4c8438"/>
<rect x="984" y="216" width="36" height="12" fill="#4a8236"/>
<rect x="1020" y="216" width="12" height="12" fill="#4f8840"/>
<rect x="1032" y="216" width="12" height="12" fill="#bccac0"/>
<rect x="1044" y="216" width="36" height="12" fill="#f4f4f4"/>
<rect x="396" y="228" width="12" height="12" fill="#e6e6e6"/>
<rect x="408" y="228" width="60" height="12" fill="#3e7227"/>
<rect x="468" y="228" width="12" height="12" fill="#5a8038"/>
<rect x="480" y="228" width="12" height="12" fill="#5a6e56"/>
<rect x="492" y="228" width="12" height="12" fill="#84a064"/>
<rect x="504" y="228" width="12" height="12" fill="#4a8038"/>
<rect x="516" y="228" width="12" height="12" fill="#437a32"/>
<rect x="528" y="228" width="12" height="12" fill="#3e7528"/>
<rect x="540" y="228" width="12" height="12" fill="#437a30"/>
<rect x="552" y="228" width="12" height="12" fill="#68904a"/>
<rect x="564" y="228" width="12" height="12" fill="#587a56"/>
<rect x="576" y="228" width="12" height="12" fill="#84a070"/>
<rect x="588" y="228" width="84" height="12" fill="#3f7228"/>
<rect x="672" y="228" width="12" height="12" fill="#437628"/>
<rect x="684" y="228" width="36" height="12" fill="#5a8a48"/>
<rect x="720" y="228" width="12" height="12" fill="#9aac90"/>
<rect x="732" y="228" width="12" height="12" fill="#c4ccc0"/>
<rect x="744" y="228" width="24" height="12" fill="#d4d6d4"/>
<rect x="768" y="228" width="12" height="12" fill="#b0bca8"/>
<rect x="780" y="228" width="12" height="12" fill="#629050"/>
<rect x="792" y="228" width="24" height="12" fill="#5a8a44"/>
<rect x="816" y="228" width="12" height="12" fill="#4a7c34"/>
<rect x="828" y="228" width="12" height="12" fill="#4f8640"/>
<rect x="840" y="228" width="12" height="12" fill="#5e8c50"/>
<rect x="852" y="228" width="12" height="12" fill="#54883c"/>
<rect x="864" y="228" width="132" height="12" fill="#467e30"/>
<rect x="996" y="228" width="24" height="12" fill="#5a8c44"/>
<rect x="1020" y="228" width="12" height="12" fill="#4f8840"/>
<rect x="1032" y="228" width="12" height="12" fill="#bccab8"/>
<rect x="1044" y="228" width="36" height="12" fill="#f4f4f4"/>
<rect x="348" y="240" width="12" height="12" fill="#dfe6e0"/>
<rect x="360" y="240" width="48" height="12" fill="#a2b4a0"/>
<rect x="408" y="240" width="12" height="12" fill="#3f7430"/>
<rect x="420" y="240" width="12" height="12" fill="#5e8a4e"/>
<rect x="432" y="240" width="36" height="12" fill="#3e7227"/>
<rect x="468" y="240" width="12" height="12" fill="#849860"/>
<rect x="480" y="240" width="12" height="12" fill="#5c6a5a"/>
<rect x="492" y="240" width="12" height="12" fill="#8ea468"/>
<rect x="504" y="240" width="12" height="12" fill="#8aa46c"/>
<rect x="516" y="240" width="12" height="12" fill="#9aa46e"/>
<rect x="528" y="240" width="12" height="12" fill="#8aa672"/>
<rect x="540" y="240" width="12" height="12" fill="#3f7a30"/>
<rect x="552" y="240" width="12" height="12" fill="#96a66c"/>
<rect x="564" y="240" width="12" height="12" fill="#6c7a6a"/>
<rect x="576" y="240" width="12" height="12" fill="#94a673"/>
<rect x="588" y="240" width="12" height="12" fill="#a0a870"/>
<rect x="600" y="240" width="12" height="12" fill="#a8ac78"/>
<rect x="612" y="240" width="12" height="12" fill="#6a9858"/>
<rect x="624" y="240" width="48" height="12" fill="#3e7227"/>
<rect x="672" y="240" width="12" height="12" fill="#6a9858"/>
<rect x="684" y="240" width="12" height="12" fill="#729a60"/>
<rect x="696" y="240" width="12" height="12" fill="#5a8a44"/>
<rect x="708" y="240" width="12" height="12" fill="#c4c8c0"/>
<rect x="720" y="240" width="72" height="12" fill="#d0d0d2"/>
<rect x="792" y="240" width="24" height="12" fill="#5c8c44"/>
<rect x="816" y="240" width="12" height="12" fill="#4a7a30"/>
<rect x="828" y="240" width="168" height="12" fill="#447a2e"/>
<rect x="996" y="240" width="12" height="12" fill="#a4ac70"/>
<rect x="1008" y="240" width="12" height="12" fill="#9cac78"/>
<rect x="1020" y="240" width="12" height="12" fill="#5e8e4c"/>
<rect x="1032" y="240" width="12" height="12" fill="#b0c0ac"/>
<rect x="1044" y="240" width="36" height="12" fill="#f4f4f4"/>
<rect x="348" y="252" width="12" height="12" fill="#aeb498"/>
<rect x="360" y="252" width="36" height="12" fill="#9a9220"/>
<rect x="396" y="252" width="12" height="12" fill="#66822a"/>
<rect x="408" y="252" width="12" height="12" fill="#4a7c38"/>
<rect x="420" y="252" width="12" height="12" fill="#54803a"/>
<rect x="432" y="252" width="36" height="12" fill="#3e7227"/>
<rect x="468" y="252" width="12" height="12" fill="#93a676"/>
<rect x="480" y="252" width="12" height="12" fill="#66746a"/>
<rect x="492" y="252" width="12" height="12" fill="#909e5e"/>
<rect x="504" y="252" width="12" height="12" fill="#7c9e5c"/>
<rect x="516" y="252" width="12" height="12" fill="#96a060"/>
<rect x="528" y="252" width="12" height="12" fill="#78986a"/>
<rect x="540" y="252" width="12" height="12" fill="#437c32"/>
<rect x="552" y="252" width="12" height="12" fill="#9aa870"/>
<rect x="564" y="252" width="12" height="12" fill="#707c70"/>
<rect x="576" y="252" width="12" height="12" fill="#8a9c62"/>
<rect x="588" y="252" width="12" height="12" fill="#9aa264"/>
<rect x="600" y="252" width="12" height="12" fill="#a6a870"/>
<rect x="612" y="252" width="12" height="12" fill="#5e9250"/>
<rect x="624" y="252" width="48" height="12" fill="#3e7227"/>
<rect x="672" y="252" width="12" height="12" fill="#6a9858"/>
<rect x="684" y="252" width="12" height="12" fill="#4f8238"/>
<rect x="696" y="252" width="12" height="12" fill="#b4bcac"/>
<rect x="708" y="252" width="84" height="12" fill="#cfcfd1"/>
<rect x="792" y="252" width="12" height="12" fill="#c8cac8"/>
<rect x="804" y="252" width="12" height="12" fill="#467a2c"/>
<rect x="816" y="252" width="12" height="12" fill="#4c7c34"/>
<rect x="828" y="252" width="48" height="12" fill="#437a2e"/>
<rect x="876" y="252" width="120" height="12" fill="#447a2e"/>
<rect x="996" y="252" width="12" height="12" fill="#b0b480"/>
<rect x="1008" y="252" width="12" height="12" fill="#9cac78"/>
<rect x="1020" y="252" width="12" height="12" fill="#5e8e4c"/>
<rect x="1032" y="252" width="12" height="12" fill="#4a8238"/>
<rect x="1044" y="252" width="12" height="12" fill="#7aa070"/>
<rect x="1056" y="252" width="12" height="12" fill="#7e9e64"/>
<rect x="1068" y="252" width="12" height="12" fill="#b0bca0"/>
<rect x="348" y="264" width="12" height="12" fill="#a9ae90"/>
<rect x="360" y="264" width="36" height="12" fill="#9a9422"/>
<rect x="396" y="264" width="12" height="12" fill="#608226"/>
<rect x="408" y="264" width="12" height="12" fill="#4a7e38"/>
<rect x="420" y="264" width="12" height="12" fill="#4c7c2a"/>
<rect x="432" y="264" width="36" height="12" fill="#3e7227"/>
<rect x="468" y="264" width="12" height="12" fill="#7c9450"/>
<rect x="480" y="264" width="12" height="12" fill="#585c5a"/>
<rect x="492" y="264" width="12" height="12" fill="#a8aa72"/>
<rect x="504" y="264" width="12" height="12" fill="#8aa882"/>
<rect x="516" y="264" width="12" height="12" fill="#8c9466"/>
<rect x="528" y="264" width="12" height="12" fill="#7c9c72"/>
<rect x="540" y="264" width="12" height="12" fill="#437c32"/>
<rect x="552" y="264" width="12" height="12" fill="#8a9850"/>
<rect x="564" y="264" width="12" height="12" fill="#5c6060"/>
<rect x="576" y="264" width="12" height="12" fill="#a6ae84"/>
<rect x="588" y="264" width="12" height="12" fill="#aaae80"/>
<rect x="600" y="264" width="12" height="12" fill="#b0b084"/>
<rect x="612" y="264" width="12" height="12" fill="#7aa474"/>
<rect x="624" y="264" width="36" height="12" fill="#3e7227"/>
<rect x="660" y="264" width="12" height="12" fill="#4a7e34"/>
<rect x="672" y="264" width="12" height="12" fill="#74a064"/>
<rect x="684" y="264" width="12" height="12" fill="#5f8c54"/>
<rect x="696" y="264" width="108" height="12" fill="#cfcfd1"/>
<rect x="804" y="264" width="12" height="12" fill="#84a078"/>
<rect x="816" y="264" width="12" height="12" fill="#5a8c50"/>
<rect x="828" y="264" width="12" height="12" fill="#4a8038"/>
<rect x="840" y="264" width="12" height="12" fill="#437a2e"/>
<rect x="852" y="264" width="24" height="12" fill="#7a9c58"/>
<rect x="876" y="264" width="120" height="12" fill="#447a2e"/>
<rect x="996" y="264" width="12" height="12" fill="#a8b078"/>
<rect x="1008" y="264" width="12" height="12" fill="#9aaa78"/>
<rect x="1020" y="264" width="12" height="12" fill="#5a8c48"/>
<rect x="1032" y="264" width="12" height="12" fill="#4a8238"/>
<rect x="1044" y="264" width="12" height="12" fill="#98ac74"/>
<rect x="1056" y="264" width="12" height="12" fill="#9ca848"/>
<rect x="1068" y="264" width="12" height="12" fill="#b0b894"/>
<rect x="348" y="276" width="12" height="12" fill="#a9ae90"/>
<rect x="360" y="276" width="36" height="12" fill="#9a9422"/>
<rect x="396" y="276" width="12" height="12" fill="#5f8428"/>
<rect x="408" y="276" width="12" height="12" fill="#6a9454"/>
<rect x="420" y="276" width="12" height="12" fill="#578430"/>
<rect x="432" y="276" width="36" height="12" fill="#3e7227"/>
<rect x="468" y="276" width="12" height="12" fill="#94a888"/>
<rect x="480" y="276" width="12" height="12" fill="#606860"/>
<rect x="492" y="276" width="12" height="12" fill="#8c9c50"/>
<rect x="504" y="276" width="12" height="12" fill="#7a9c58"/>
<rect x="516" y="276" width="12" height="12" fill="#9aa456"/>
<rect x="528" y="276" width="12" height="12" fill="#6c9450"/>
<rect x="540" y="276" width="12" height="12" fill="#3f7c34"/>
<rect x="552" y="276" width="12" height="12" fill="#809468"/>
<rect x="564" y="276" width="12" height="12" fill="#646e68"/>
<rect x="576" y="276" width="12" height="12" fill="#7e9240"/>
<rect x="588" y="276" width="12" height="12" fill="#96a058"/>
<rect x="600" y="276" width="12" height="12" fill="#a6a860"/>
<rect x="612" y="276" width="12" height="12" fill="#609258"/>
<rect x="624" y="276" width="24" height="12" fill="#3e7227"/>
<rect x="648" y="276" width="12" height="12" fill="#c8a828"/>
<rect x="660" y="276" width="12" height="12" fill="#e0b824"/>
<rect x="672" y="276" width="12" height="12" fill="#c8b858"/>
<rect x="684" y="276" width="12" height="12" fill="#7ea480"/>
<rect x="696" y="276" width="108" height="12" fill="#cfcfd1"/>
<rect x="804" y="276" width="12" height="12" fill="#9aac90"/>
<rect x="816" y="276" width="12" height="12" fill="#98a43c"/>
<rect x="828" y="276" width="12" height="12" fill="#d8bc38"/>
<rect x="840" y="276" width="24" height="12" fill="#b8ac38"/>
<rect x="864" y="276" width="12" height="12" fill="#a8a840"/>
<rect x="876" y="276" width="120" height="12" fill="#447a2e"/>
<rect x="996" y="276" width="12" height="12" fill="#a4b080"/>
<rect x="1008" y="276" width="12" height="12" fill="#98aa7c"/>
<rect x="1020" y="276" width="12" height="12" fill="#5a8c48"/>
<rect x="1032" y="276" width="12" height="12" fill="#4a8238"/>
<rect x="1044" y="276" width="12" height="12" fill="#84a058"/>
<rect x="1056" y="276" width="12" height="12" fill="#8ca040"/>
<rect x="1068" y="276" width="12" height="12" fill="#b0b894"/>
<rect x="348" y="288" width="12" height="12" fill="#b4b48c"/>
<rect x="360" y="288" width="36" height="12" fill="#b0a024"/>
<rect x="396" y="288" width="12" height="12" fill="#6a8426"/>
<rect x="408" y="288" width="12" height="12" fill="#4f8448"/>
<rect x="420" y="288" width="12" height="12" fill="#58803a"/>
<rect x="432" y="288" width="12" height="12" fill="#437628"/>
<rect x="444" y="288" width="24" height="12" fill="#3e7227"/>
<rect x="468" y="288" width="12" height="12" fill="#4f8040"/>
<rect x="480" y="288" width="12" height="12" fill="#587a60"/>
<rect x="492" y="288" width="12" height="12" fill="#628032"/>
<rect x="504" y="288" width="12" height="12" fill="#8ca882"/>
<rect x="516" y="288" width="12" height="12" fill="#9aa070"/>
<rect x="528" y="288" width="12" height="12" fill="#88a474"/>
<rect x="540" y="288" width="12" height="12" fill="#3f7a2c"/>
<rect x="552" y="288" width="12" height="12" fill="#6c9a5c"/>
<rect x="564" y="288" width="12" height="12" fill="#506c3c"/>
<rect x="576" y="288" width="12" height="12" fill="#5e8434"/>
<rect x="588" y="288" width="12" height="12" fill="#a4a878"/>
<rect x="600" y="288" width="12" height="12" fill="#a8a874"/>
<rect x="612" y="288" width="12" height="12" fill="#6c9c5c"/>
<rect x="624" y="288" width="24" height="12" fill="#3e7227"/>
<rect x="648" y="288" width="12" height="12" fill="#c0a428"/>
<rect x="660" y="288" width="12" height="12" fill="#dcb828"/>
<rect x="672" y="288" width="12" height="12" fill="#c0b458"/>
<rect x="684" y="288" width="12" height="12" fill="#84a478"/>
<rect x="696" y="288" width="108" height="12" fill="#cfcfd1"/>
<rect x="804" y="288" width="12" height="12" fill="#b0bca8"/>
<rect x="816" y="288" width="12" height="12" fill="#788c2c"/>
<rect x="828" y="288" width="12" height="12" fill="#d0b838"/>
<rect x="840" y="288" width="12" height="12" fill="#c0b038"/>
<rect x="852" y="288" width="24" height="12" fill="#84a048"/>
<rect x="876" y="288" width="120" height="12" fill="#447a2e"/>
<rect x="996" y="288" width="12" height="12" fill="#a8b080"/>
<rect x="1008" y="288" width="12" height="12" fill="#9cac7c"/>
<rect x="1020" y="288" width="12" height="12" fill="#5a8c48"/>
<rect x="1032" y="288" width="12" height="12" fill="#4a8238"/>
<rect x="1044" y="288" width="24" height="12" fill="#5a8c44"/>
<rect x="1068" y="288" width="12" height="12" fill="#94ac90"/>
<rect x="348" y="300" width="12" height="12" fill="#b8b894"/>
<rect x="360" y="300" width="36" height="12" fill="#aca024"/>
<rect x="396" y="300" width="12" height="12" fill="#6a8426"/>
<rect x="408" y="300" width="12" height="12" fill="#4f8648"/>
<rect x="420" y="300" width="12" height="12" fill="#4a7e38"/>
<rect x="432" y="300" width="12" height="12" fill="#4f8040"/>
<rect x="444" y="300" width="24" height="12" fill="#3e7227"/>
<rect x="468" y="300" width="12" height="12" fill="#5a883f"/>
<rect x="480" y="300" width="12" height="12" fill="#4a4420"/>
<rect x="492" y="300" width="12" height="12" fill="#527828"/>
<rect x="504" y="300" width="12" height="12" fill="#84a468"/>
<rect x="516" y="300" width="12" height="12" fill="#96a468"/>
<rect x="528" y="300" width="12" height="12" fill="#7a9c64"/>
<rect x="540" y="300" width="12" height="12" fill="#3f7a2c"/>
<rect x="552" y="300" width="12" height="12" fill="#8a9c54"/>
<rect x="564" y="300" width="12" height="12" fill="#262a14"/>
<rect x="576" y="300" width="12" height="12" fill="#5a8030"/>
<rect x="588" y="300" width="12" height="12" fill="#9ca060"/>
<rect x="600" y="300" width="12" height="12" fill="#a8a870"/>
<rect x="612" y="300" width="12" height="12" fill="#5e9450"/>
<rect x="624" y="300" width="36" height="12" fill="#3e7227"/>
<rect x="660" y="300" width="12" height="12" fill="#4a7e38"/>
<rect x="672" y="300" width="12" height="12" fill="#7aa06c"/>
<rect x="684" y="300" width="12" height="12" fill="#5a8a48"/>
<rect x="696" y="300" width="108" height="12" fill="#cfcfd1"/>
<rect x="804" y="300" width="12" height="12" fill="#6a9858"/>
<rect x="816" y="300" width="12" height="12" fill="#5a8c44"/>
<rect x="828" y="300" width="12" height="12" fill="#4f8a48"/>
<rect x="840" y="300" width="12" height="12" fill="#467e34"/>
<rect x="852" y="300" width="24" height="12" fill="#a4ac64"/>
<rect x="876" y="300" width="120" height="12" fill="#447a2e"/>
<rect x="996" y="300" width="12" height="12" fill="#a8b07c"/>
<rect x="1008" y="300" width="12" height="12" fill="#98a878"/>
<rect x="1020" y="300" width="12" height="12" fill="#5a8c48"/>
<rect x="1032" y="300" width="12" height="12" fill="#4a8238"/>
<rect x="1044" y="300" width="12" height="12" fill="#9aac70"/>
<rect x="1056" y="300" width="12" height="12" fill="#a8a448"/>
<rect x="1068" y="300" width="12" height="12" fill="#b8bc88"/>
<rect x="348" y="312" width="12" height="12" fill="#b4b498"/>
<rect x="360" y="312" width="36" height="12" fill="#9c9422"/>
<rect x="396" y="312" width="12" height="12" fill="#648226"/>
<rect x="408" y="312" width="12" height="12" fill="#4a8240"/>
<rect x="420" y="312" width="12" height="12" fill="#467a34"/>
<rect x="432" y="312" width="12" height="12" fill="#467a38"/>
<rect x="444" y="312" width="24" height="12" fill="#3e7227"/>
<rect x="468" y="312" width="12" height="12" fill="#4c7e38"/>
<rect x="480" y="312" width="12" height="12" fill="#5c5c3c"/>
<rect x="492" y="312" width="12" height="12" fill="#527828"/>
<rect x="504" y="312" width="12" height="12" fill="#84a468"/>
<rect x="516" y="312" width="12" height="12" fill="#96a468"/>
<rect x="528" y="312" width="12" height="12" fill="#78a068"/>
<rect x="540" y="312" width="12" height="12" fill="#3f7a2c"/>
<rect x="552" y="312" width="12" height="12" fill="#749c50"/>
<rect x="564" y="312" width="12" height="12" fill="#444a34"/>
<rect x="576" y="312" width="12" height="12" fill="#548034"/>
<rect x="588" y="312" width="12" height="12" fill="#a8ac80"/>
<rect x="600" y="312" width="12" height="12" fill="#acac7c"/>
<rect x="612" y="312" width="12" height="12" fill="#6a9c60"/>
<rect x="624" y="312" width="48" height="12" fill="#3e7227"/>
<rect x="672" y="312" width="12" height="12" fill="#74a068"/>
<rect x="684" y="312" width="12" height="12" fill="#4c8038"/>
<rect x="696" y="312" width="12" height="12" fill="#b0b8a8"/>
<rect x="708" y="312" width="84" height="12" fill="#cfcfd1"/>
<rect x="792" y="312" width="12" height="12" fill="#c4c8c0"/>
<rect x="804" y="312" width="12" height="12" fill="#548840"/>
<rect x="816" y="312" width="12" height="12" fill="#4f843c"/>
<rect x="828" y="312" width="12" height="12" fill="#437a30"/>
<rect x="840" y="312" width="12" height="12" fill="#5a9050"/>
<rect x="852" y="312" width="12" height="12" fill="#88a070"/>
<rect x="864" y="312" width="12" height="12" fill="#8c9c68"/>
<rect x="876" y="312" width="120" height="12" fill="#447a2e"/>
<rect x="996" y="312" width="12" height="12" fill="#b8b870"/>
<rect x="1008" y="312" width="12" height="12" fill="#a4b074"/>
<rect x="1020" y="312" width="12" height="12" fill="#5a8c48"/>
<rect x="1032" y="312" width="12" height="12" fill="#4a8238"/>
<rect x="1044" y="312" width="12" height="12" fill="#98a868"/>
<rect x="1056" y="312" width="12" height="12" fill="#a4a048"/>
<rect x="1068" y="312" width="12" height="12" fill="#b4b884"/>
<rect x="348" y="324" width="12" height="12" fill="#b8b89c"/>
<rect x="360" y="324" width="36" height="12" fill="#9c9422"/>
<rect x="396" y="324" width="12" height="12" fill="#648226"/>
<rect x="408" y="324" width="12" height="12" fill="#3f7630"/>
<rect x="420" y="324" width="24" height="12" fill="#3c7228"/>
<rect x="444" y="324" width="24" height="12" fill="#3e7227"/>
<rect x="468" y="324" width="12" height="12" fill="#437a2c"/>
<rect x="480" y="324" width="12" height="12" fill="#545c48"/>
<rect x="492" y="324" width="12" height="12" fill="#4c7426"/>
<rect x="504" y="324" width="12" height="12" fill="#88a870"/>
<rect x="516" y="324" width="12" height="12" fill="#96a46a"/>
<rect x="528" y="324" width="12" height="12" fill="#80a470"/>
<rect x="540" y="324" width="12" height="12" fill="#3f7a2c"/>
<rect x="552" y="324" width="12" height="12" fill="#749c50"/>
<rect x="564" y="324" width="12" height="12" fill="#40482c"/>
<rect x="576" y="324" width="12" height="12" fill="#528034"/>
<rect x="588" y="324" width="12" height="12" fill="#a4a87c"/>
<rect x="600" y="324" width="12" height="12" fill="#aaac7c"/>
<rect x="612" y="324" width="12" height="12" fill="#6a9c60"/>
<rect x="624" y="324" width="48" height="12" fill="#3e7227"/>
<rect x="672" y="324" width="12" height="12" fill="#6e9c60"/>
<rect x="684" y="324" width="24" height="12" fill="#548840"/>
<rect x="708" y="324" width="12" height="12" fill="#b8c0b0"/>
<rect x="720" y="324" width="60" height="12" fill="#cfcfd1"/>
<rect x="780" y="324" width="12" height="12" fill="#ccccd0"/>
<rect x="792" y="324" width="12" height="12" fill="#78a068"/>
<rect x="804" y="324" width="12" height="12" fill="#7aa070"/>
<rect x="816" y="324" width="12" height="12" fill="#4f843c"/>
<rect x="828" y="324" width="12" height="12" fill="#437a30"/>
<rect x="840" y="324" width="12" height="12" fill="#5a9050"/>
<rect x="852" y="324" width="12" height="12" fill="#8ca474"/>
<rect x="864" y="324" width="12" height="12" fill="#94a870"/>
<rect x="876" y="324" width="120" height="12" fill="#447a2e"/>
<rect x="996" y="324" width="12" height="12" fill="#4f8640"/>
<rect x="1008" y="324" width="12" height="12" fill="#5e9450"/>
<rect x="1020" y="324" width="36" height="12" fill="#4a8238"/>
<rect x="1056" y="324" width="12" height="12" fill="#4f8640"/>
<rect x="1068" y="324" width="12" height="12" fill="#8ca88c"/>
<rect x="348" y="336" width="12" height="12" fill="#b4b89c"/>
<rect x="360" y="336" width="36" height="12" fill="#a09622"/>
<rect x="396" y="336" width="12" height="12" fill="#648226"/>
<rect x="408" y="336" width="12" height="12" fill="#4f8448"/>
<rect x="420" y="336" width="12" height="12" fill="#477c36"/>
<rect x="432" y="336" width="12" height="12" fill="#4a7e3c"/>
<rect x="444" y="336" width="24" height="12" fill="#3e7227"/>
<rect x="468" y="336" width="12" height="12" fill="#6a9450"/>
<rect x="480" y="336" width="12" height="12" fill="#584818"/>
<rect x="492" y="336" width="12" height="12" fill="#4a7226"/>
<rect x="504" y="336" width="12" height="12" fill="#7c9c60"/>
<rect x="516" y="336" width="12" height="12" fill="#96a060"/>
<rect x="528" y="336" width="12" height="12" fill="#74985c"/>
<rect x="540" y="336" width="12" height="12" fill="#3f7a2c"/>
<rect x="552" y="336" width="12" height="12" fill="#8aa058"/>
<rect x="564" y="336" width="12" height="12" fill="#2c2818"/>
<rect x="576" y="336" width="12" height="12" fill="#54802c"/>
<rect x="588" y="336" width="12" height="12" fill="#a0a474"/>
<rect x="600" y="336" width="12" height="12" fill="#b4b48c"/>
<rect x="612" y="336" width="12" height="12" fill="#5a9050"/>
<rect x="624" y="336" width="96" height="12" fill="#417628"/>
<rect x="720" y="336" width="12" height="12" fill="#84a07c"/>
<rect x="732" y="336" width="12" height="12" fill="#b4c0ac"/>
<rect x="744" y="336" width="24" height="12" fill="#d0d0d0"/>
<rect x="768" y="336" width="12" height="12" fill="#98ac90"/>
<rect x="780" y="336" width="12" height="12" fill="#4a7e34"/>
<rect x="792" y="336" width="36" height="12" fill="#417628"/>
<rect x="828" y="336" width="48" height="12" fill="#437a2e"/>
<rect x="876" y="336" width="120" height="12" fill="#447a2e"/>
<rect x="996" y="336" width="12" height="12" fill="#8ca068"/>
<rect x="1008" y="336" width="12" height="12" fill="#7c8088"/>
<rect x="1020" y="336" width="12" height="12" fill="#828890"/>
<rect x="1032" y="336" width="12" height="12" fill="#88a060"/>
<rect x="1044" y="336" width="12" height="12" fill="#84a070"/>
<rect x="1056" y="336" width="12" height="12" fill="#b8c4ae"/>
<rect x="1068" y="336" width="12" height="12" fill="#c4c8bc"/>
<rect x="1080" y="336" width="12" height="12" fill="#e8e8e8"/>
<rect x="348" y="348" width="12" height="12" fill="#bcbca0"/>
<rect x="360" y="348" width="36" height="12" fill="#b4a024"/>
<rect x="396" y="348" width="12" height="12" fill="#6a8426"/>
<rect x="408" y="348" width="12" height="12" fill="#4f8448"/>
<rect x="420" y="348" width="12" height="12" fill="#3f7628"/>
<rect x="432" y="348" width="36" height="12" fill="#3e7227"/>
<rect x="468" y="348" width="12" height="12" fill="#4a7e34"/>
<rect x="480" y="348" width="12" height="12" fill="#5c6c5c"/>
<rect x="492" y="348" width="12" height="12" fill="#4c7626"/>
<rect x="504" y="348" width="12" height="12" fill="#8ca878"/>
<rect x="516" y="348" width="12" height="12" fill="#9ca46c"/>
<rect x="528" y="348" width="12" height="12" fill="#84a470"/>
<rect x="540" y="348" width="12" height="12" fill="#3f7a2c"/>
<rect x="552" y="348" width="12" height="12" fill="#5c9050"/>
<rect x="564" y="348" width="12" height="12" fill="#2c3830"/>
<rect x="576" y="348" width="12" height="12" fill="#5a8430"/>
<rect x="588" y="348" width="12" height="12" fill="#b0b088"/>
<rect x="600" y="348" width="12" height="12" fill="#b4b48c"/>
<rect x="612" y="348" width="12" height="12" fill="#7aa478"/>
<rect x="624" y="348" width="108" height="12" fill="#417628"/>
<rect x="732" y="348" width="12" height="12" fill="#4f8440"/>
<rect x="744" y="348" width="84" height="12" fill="#417628"/>
<rect x="828" y="348" width="60" height="12" fill="#437a2e"/>
<rect x="888" y="348" width="36" height="12" fill="#4a7e30"/>
<rect x="924" y="348" width="12" height="12" fill="#4f8234"/>
<rect x="936" y="348" width="12" height="12" fill="#84a06c"/>
<rect x="948" y="348" width="12" height="12" fill="#b0b884"/>
<rect x="960" y="348" width="24" height="12" fill="#4a8034"/>
<rect x="984" y="348" width="12" height="12" fill="#6a9860"/>
<rect x="996" y="348" width="12" height="12" fill="#98a068"/>
<rect x="1008" y="348" width="12" height="12" fill="#66687c"/>
<rect x="1020" y="348" width="12" height="12" fill="#70708c"/>
<rect x="1032" y="348" width="12" height="12" fill="#809c46"/>
<rect x="1044" y="348" width="12" height="12" fill="#9aaa7c"/>
<rect x="1056" y="348" width="12" height="12" fill="#eeeeee"/>
<rect x="1068" y="348" width="12" height="12" fill="#f0f0f0"/>
<rect x="1080" y="348" width="12" height="12" fill="#e2e2e2"/>
<rect x="348" y="360" width="12" height="12" fill="#b8b898"/>
<rect x="360" y="360" width="36" height="12" fill="#a89c22"/>
<rect x="396" y="360" width="12" height="12" fill="#668226"/>
<rect x="408" y="360" width="12" height="12" fill="#4f8448"/>
<rect x="420" y="360" width="12" height="12" fill="#3f7628"/>
<rect x="432" y="360" width="36" height="12" fill="#3e7227"/>
<rect x="468" y="360" width="12" height="12" fill="#5e8840"/>
<rect x="480" y="360" width="12" height="12" fill="#64643c"/>
<rect x="492" y="360" width="12" height="12" fill="#4c7428"/>
<rect x="504" y="360" width="12" height="12" fill="#5c883c"/>
<rect x="516" y="360" width="12" height="12" fill="#6a8c3c"/>
<rect x="528" y="360" width="12" height="12" fill="#588438"/>
<rect x="540" y="360" width="12" height="12" fill="#3f7a2c"/>
<rect x="552" y="360" width="12" height="12" fill="#80a058"/>
<rect x="564" y="360" width="12" height="12" fill="#2c2818"/>
<rect x="576" y="360" width="12" height="12" fill="#548030"/>
<rect x="588" y="360" width="12" height="12" fill="#788c38"/>
<rect x="600" y="360" width="12" height="12" fill="#809440"/>
<rect x="612" y="360" width="12" height="12" fill="#4a8038"/>
<rect x="624" y="360" width="60" height="12" fill="#417628"/>
<rect x="684" y="360" width="12" height="12" fill="#4a7a24"/>
<rect x="696" y="360" width="12" height="12" fill="#3f6830"/>
<rect x="708" y="360" width="60" height="12" fill="#46464a"/>
<rect x="768" y="360" width="12" height="12" fill="#46643c"/>
<rect x="780" y="360" width="12" height="12" fill="#4a7a24"/>
<rect x="792" y="360" width="36" height="12" fill="#417628"/>
<rect x="828" y="360" width="60" height="12" fill="#437a2e"/>
<rect x="888" y="360" width="60" height="12" fill="#4a8034"/>
<rect x="948" y="360" width="12" height="12" fill="#6c9c48"/>
<rect x="960" y="360" width="12" height="12" fill="#467e30"/>
<rect x="972" y="360" width="12" height="12" fill="#417a2e"/>
<rect x="984" y="360" width="12" height="12" fill="#4f8644"/>
<rect x="996" y="360" width="12" height="12" fill="#c4bc64"/>
<rect x="1008" y="360" width="12" height="12" fill="#98ac78"/>
<rect x="1020" y="360" width="12" height="12" fill="#98aa74"/>
<rect x="1032" y="360" width="12" height="12" fill="#90a06c"/>
<rect x="1044" y="360" width="12" height="12" fill="#a0aa7a"/>
<rect x="1056" y="360" width="24" height="12" fill="#f0f0f0"/>
<rect x="1080" y="360" width="12" height="12" fill="#e2e2e2"/>
<rect x="348" y="372" width="12" height="12" fill="#b8b89c"/>
<rect x="360" y="372" width="36" height="12" fill="#9c9422"/>
<rect x="396" y="372" width="12" height="12" fill="#648226"/>
<rect x="408" y="372" width="12" height="12" fill="#4a8040"/>
<rect x="420" y="372" width="12" height="12" fill="#3f7628"/>
<rect x="432" y="372" width="132" height="12" fill="#3e7628"/>
<rect x="564" y="372" width="12" height="12" fill="#4a7c34"/>
<rect x="576" y="372" width="12" height="12" fill="#4f8444"/>
<rect x="588" y="372" width="12" height="12" fill="#4a803c"/>
<rect x="600" y="372" width="72" height="12" fill="#3e7628"/>
<rect x="672" y="372" width="12" height="12" fill="#4f7826"/>
<rect x="684" y="372" width="12" height="12" fill="#c8b420"/>
<rect x="696" y="372" width="12" height="12" fill="#706a28"/>
<rect x="708" y="372" width="60" height="12" fill="#48484c"/>
<rect x="768" y="372" width="12" height="12" fill="#6c6830"/>
<rect x="780" y="372" width="12" height="12" fill="#d0b820"/>
<rect x="792" y="372" width="12" height="12" fill="#688426"/>
<rect x="804" y="372" width="24" height="12" fill="#417628"/>
<rect x="828" y="372" width="60" height="12" fill="#437a2e"/>
<rect x="888" y="372" width="60" height="12" fill="#4a8034"/>
<rect x="948" y="372" width="12" height="12" fill="#6a9840"/>
<rect x="960" y="372" width="12" height="12" fill="#4f8234"/>
<rect x="972" y="372" width="12" height="12" fill="#417a2e"/>
<rect x="984" y="372" width="12" height="12" fill="#4f8644"/>
<rect x="996" y="372" width="12" height="12" fill="#a8a068"/>
<rect x="1008" y="372" width="12" height="12" fill="#98a880"/>
<rect x="1020" y="372" width="12" height="12" fill="#98aa94"/>
<rect x="1032" y="372" width="12" height="12" fill="#bccabc"/>
<rect x="1044" y="372" width="12" height="12" fill="#94a874"/>
<rect x="1056" y="372" width="24" height="12" fill="#e8e8e8"/>
<rect x="1080" y="372" width="12" height="12" fill="#e2e2e2"/>
<rect x="348" y="384" width="12" height="12" fill="#b8b8a0"/>
<rect x="360" y="384" width="36" height="12" fill="#9c9422"/>
<rect x="396" y="384" width="12" height="12" fill="#648226"/>
<rect x="408" y="384" width="12" height="12" fill="#417a30"/>
<rect x="420" y="384" width="12" height="12" fill="#3f7628"/>
<rect x="432" y="384" width="12" height="12" fill="#4f8648"/>
<rect x="444" y="384" width="12" height="12" fill="#4a7c28"/>
<rect x="456" y="384" width="12" height="12" fill="#5a8424"/>
<rect x="468" y="384" width="36" height="12" fill="#417a30"/>
<rect x="504" y="384" width="36" height="12" fill="#3e762a"/>
<rect x="540" y="384" width="12" height="12" fill="#437a30"/>
<rect x="552" y="384" width="24" height="12" fill="#3f7828"/>
<rect x="576" y="384" width="12" height="12" fill="#8ca070"/>
<rect x="588" y="384" width="12" height="12" fill="#8ca06c"/>
<rect x="600" y="384" width="12" height="12" fill="#5c9050"/>
<rect x="612" y="384" width="12" height="12" fill="#80884c"/>
<rect x="624" y="384" width="12" height="12" fill="#787858"/>
<rect x="636" y="384" width="12" height="12" fill="#8c9c50"/>
<rect x="648" y="384" width="12" height="12" fill="#467e38"/>
<rect x="660" y="384" width="12" height="12" fill="#437a30"/>
<rect x="672" y="384" width="12" height="12" fill="#4c7828"/>
<rect x="684" y="384" width="12" height="12" fill="#c8b41c"/>
<rect x="696" y="384" width="12" height="12" fill="#6c6828"/>
<rect x="708" y="384" width="60" height="12" fill="#46464a"/>
<rect x="768" y="384" width="12" height="12" fill="#686830"/>
<rect x="780" y="384" width="12" height="12" fill="#ccb41c"/>
<rect x="792" y="384" width="12" height="12" fill="#5f8226"/>
<rect x="804" y="384" width="24" height="12" fill="#417628"/>
<rect x="828" y="384" width="12" height="12" fill="#437a2e"/>
<rect x="840" y="384" width="12" height="12" fill="#4a7e38"/>
<rect x="852" y="384" width="12" height="12" fill="#54803a"/>
<rect x="864" y="384" width="48" height="12" fill="#4c7c30"/>
<rect x="912" y="384" width="36" height="12" fill="#4a8034"/>
<rect x="948" y="384" width="12" height="12" fill="#708c38"/>
<rect x="960" y="384" width="12" height="12" fill="#4a8034"/>
<rect x="972" y="384" width="12" height="12" fill="#417a2e"/>
<rect x="984" y="384" width="12" height="12" fill="#4f8644"/>
<rect x="996" y="384" width="12" height="12" fill="#bcb448"/>
<rect x="1008" y="384" width="12" height="12" fill="#90ac70"/>
<rect x="1020" y="384" width="12" height="12" fill="#8a9a74"/>
<rect x="1032" y="384" width="12" height="12" fill="#7c9272"/>
<rect x="1044" y="384" width="12" height="12" fill="#528a3e"/>
<rect x="1056" y="384" width="12" height="12" fill="#7a9c5c"/>
<rect x="1068" y="384" width="12" height="12" fill="#94ac88"/>
<rect x="348" y="396" width="12" height="12" fill="#b8b8a0"/>
<rect x="360" y="396" width="36" height="12" fill="#9c9422"/>
<rect x="396" y="396" width="12" height="12" fill="#648226"/>
<rect x="408" y="396" width="24" height="12" fill="#4a803c"/>
<rect x="432" y="396" width="12" height="12" fill="#b0a060"/>
<rect x="444" y="396" width="12" height="12" fill="#7c8470"/>
<rect x="456" y="396" width="12" height="12" fill="#808078"/>
<rect x="468" y="396" width="12" height="12" fill="#648424"/>
<rect x="480" y="396" width="12" height="12" fill="#585448"/>
<rect x="492" y="396" width="12" height="12" fill="#383640"/>
<rect x="504" y="396" width="12" height="12" fill="#6c7040"/>
<rect x="516" y="396" width="12" height="12" fill="#708820"/>
<rect x="528" y="396" width="12" height="12" fill="#5c5c44"/>
<rect x="540" y="396" width="12" height="12" fill="#383440"/>
<rect x="552" y="396" width="12" height="12" fill="#6c7048"/>
<rect x="564" y="396" width="12" height="12" fill="#608424"/>
<rect x="576" y="396" width="12" height="12" fill="#9aa068"/>
<rect x="588" y="396" width="12" height="12" fill="#a4ac7c"/>
<rect x="600" y="396" width="12" height="12" fill="#548c4c"/>
<rect x="612" y="396" width="12" height="12" fill="#848c48"/>
<rect x="624" y="396" width="12" height="12" fill="#848444"/>
<rect x="636" y="396" width="12" height="12" fill="#88a05c"/>
<rect x="648" y="396" width="12" height="12" fill="#8c9870"/>
<rect x="660" y="396" width="12" height="12" fill="#7c9c5c"/>
<rect x="672" y="396" width="12" height="12" fill="#5a8a40"/>
<rect x="684" y="396" width="12" height="12" fill="#a8a41c"/>
<rect x="696" y="396" width="12" height="12" fill="#646628"/>
<rect x="708" y="396" width="60" height="12" fill="#48484c"/>
<rect x="768" y="396" width="12" height="12" fill="#5c6434"/>
<rect x="780" y="396" width="12" height="12" fill="#b4a81c"/>
<rect x="792" y="396" width="12" height="12" fill="#54802a"/>
<rect x="804" y="396" width="24" height="12" fill="#417628"/>
<rect x="828" y="396" width="60" height="12" fill="#467a2c"/>
<rect x="888" y="396" width="72" height="12" fill="#4f8234"/>
<rect x="960" y="396" width="36" height="12" fill="#437a2e"/>
<rect x="996" y="396" width="12" height="12" fill="#4f8648"/>
<rect x="1008" y="396" width="24" height="12" fill="#437a30"/>
<rect x="1032" y="396" width="12" height="12" fill="#548a48"/>
<rect x="1044" y="396" width="24" height="12" fill="#3f7a30"/>
<rect x="1068" y="396" width="12" height="12" fill="#88a488"/>
<rect x="348" y="408" width="12" height="12" fill="#e4e6e6"/>
<rect x="360" y="408" width="48" height="12" fill="#a2b2a0"/>
<rect x="408" y="408" width="12" height="12" fill="#3a7228"/>
<rect x="420" y="408" width="12" height="12" fill="#4a803c"/>
<rect x="432" y="408" width="12" height="12" fill="#acaca0"/>
<rect x="444" y="408" width="12" height="12" fill="#788070"/>
<rect x="456" y="408" width="12" height="12" fill="#727674"/>
<rect x="468" y="408" width="12" height="12" fill="#5c8222"/>
<rect x="480" y="408" width="12" height="12" fill="#4c5040"/>
<rect x="492" y="408" width="12" height="12" fill="#373740"/>
<rect x="504" y="408" width="12" height="12" fill="#5c6438"/>
<rect x="516" y="408" width="12" height="12" fill="#628420"/>
<rect x="528" y="408" width="12" height="12" fill="#545838"/>
<rect x="540" y="408" width="12" height="12" fill="#35343c"/>
<rect x="552" y="408" width="12" height="12" fill="#5c6438"/>
<rect x="564" y="408" width="12" height="12" fill="#5b8224"/>
<rect x="576" y="408" width="12" height="12" fill="#a0a470"/>
<rect x="588" y="408" width="12" height="12" fill="#a8b080"/>
<rect x="600" y="408" width="12" height="12" fill="#548c44"/>
<rect x="612" y="408" width="12" height="12" fill="#828448"/>
<rect x="624" y="408" width="12" height="12" fill="#707244"/>
<rect x="636" y="408" width="12" height="12" fill="#8a9e4c"/>
<rect x="648" y="408" width="12" height="12" fill="#849060"/>
<rect x="660" y="408" width="12" height="12" fill="#7a9a56"/>
<rect x="672" y="408" width="12" height="12" fill="#5a8c40"/>
<rect x="684" y="408" width="12" height="12" fill="#a09c1c"/>
<rect x="696" y="408" width="12" height="12" fill="#606424"/>
<rect x="708" y="408" width="60" height="12" fill="#48484c"/>
<rect x="768" y="408" width="12" height="12" fill="#5a6132"/>
<rect x="780" y="408" width="12" height="12" fill="#b0a41c"/>
<rect x="792" y="408" width="12" height="12" fill="#56822a"/>
<rect x="804" y="408" width="24" height="12" fill="#3f7628"/>
<rect x="828" y="408" width="60" height="12" fill="#467a2c"/>
<rect x="888" y="408" width="72" height="12" fill="#568834"/>
<rect x="960" y="408" width="72" height="12" fill="#437a2e"/>
<rect x="1032" y="408" width="12" height="12" fill="#b0c0b0"/>
<rect x="1044" y="408" width="36" height="12" fill="#f0f0f0"/>
<rect x="396" y="420" width="12" height="12" fill="#dcdcdc"/>
<rect x="408" y="420" width="12" height="12" fill="#3a7228"/>
<rect x="420" y="420" width="12" height="12" fill="#457a30"/>
<rect x="432" y="420" width="12" height="12" fill="#7c9448"/>
<rect x="444" y="420" width="24" height="12" fill="#5c8048"/>
<rect x="468" y="420" width="12" height="12" fill="#4c7e28"/>
<rect x="480" y="420" width="12" height="12" fill="#4a7034"/>
<rect x="492" y="420" width="12" height="12" fill="#547450"/>
<rect x="504" y="420" width="12" height="12" fill="#5c8440"/>
<rect x="516" y="420" width="12" height="12" fill="#4f8020"/>
<rect x="528" y="420" width="12" height="12" fill="#4f7038"/>
<rect x="540" y="420" width="12" height="12" fill="#546c50"/>
<rect x="552" y="420" width="12" height="12" fill="#507838"/>
<rect x="564" y="420" width="12" height="12" fill="#548830"/>
<rect x="576" y="420" width="12" height="12" fill="#98a46c"/>
<rect x="588" y="420" width="12" height="12" fill="#a0a870"/>
<rect x="600" y="420" width="12" height="12" fill="#6a9c58"/>
<rect x="612" y="420" width="12" height="12" fill="#847c48"/>
<rect x="624" y="420" width="12" height="12" fill="#7c7844"/>
<rect x="636" y="420" width="12" height="12" fill="#84983c"/>
<rect x="648" y="420" width="12" height="12" fill="#7c9c5c"/>
<rect x="660" y="420" width="12" height="12" fill="#6c9c54"/>
<rect x="672" y="420" width="12" height="12" fill="#548a38"/>
<rect x="684" y="420" width="12" height="12" fill="#a09c1c"/>
<rect x="696" y="420" width="12" height="12" fill="#646424"/>
<rect x="708" y="420" width="60" height="12" fill="#48484c"/>
<rect x="768" y="420" width="12" height="12" fill="#5c6030"/>
<rect x="780" y="420" width="12" height="12" fill="#b0a41c"/>
<rect x="792" y="420" width="12" height="12" fill="#5a8428"/>
<rect x="804" y="420" width="24" height="12" fill="#3f7628"/>
<rect x="828" y="420" width="12" height="12" fill="#4f7e2c"/>
<rect x="840" y="420" width="24" height="12" fill="#6c8828"/>
<rect x="864" y="420" width="72" height="12" fill="#908c24"/>
<rect x="936" y="420" width="12" height="12" fill="#9c9828"/>
<rect x="948" y="420" width="12" height="12" fill="#b0ac30"/>
<rect x="960" y="420" width="12" height="12" fill="#8ca040"/>
<rect x="972" y="420" width="12" height="12" fill="#6c8c2c"/>
<rect x="984" y="420" width="12" height="12" fill="#4f7e2c"/>
<rect x="996" y="420" width="36" height="12" fill="#437a2e"/>
<rect x="1032" y="420" width="12" height="12" fill="#a8b8a8"/>
<rect x="1044" y="420" width="36" height="12" fill="#f0f0f0"/>
<rect x="396" y="432" width="12" height="12" fill="#dcdcdc"/>
<rect x="408" y="432" width="24" height="12" fill="#3a7228"/>
<rect x="432" y="432" width="12" height="12" fill="#438434"/>
<rect x="444" y="432" width="24" height="12" fill="#417628"/>
<rect x="468" y="432" width="12" height="12" fill="#3f7428"/>
<rect x="480" y="432" width="12" height="12" fill="#5e8844"/>
<rect x="492" y="432" width="60" height="12" fill="#8c9c60"/>
<rect x="552" y="432" width="12" height="12" fill="#5a8844"/>
<rect x="564" y="432" width="12" height="12" fill="#3f7628"/>
<rect x="576" y="432" width="12" height="12" fill="#5a8c50"/>
<rect x="588" y="432" width="12" height="12" fill="#548a48"/>
<rect x="600" y="432" width="12" height="12" fill="#437a30"/>
<rect x="612" y="432" width="12" height="12" fill="#94986c"/>
<rect x="624" y="432" width="12" height="12" fill="#949c70"/>
<rect x="636" y="432" width="12" height="12" fill="#84a068"/>
<rect x="648" y="432" width="24" height="12" fill="#3f7628"/>
<rect x="672" y="432" width="12" height="12" fill="#3f7630"/>
<rect x="684" y="432" width="12" height="12" fill="#7c8c7c"/>
<rect x="696" y="432" width="12" height="12" fill="#a4aca4"/>
<rect x="708" y="432" width="12" height="12" fill="#8c8c8c"/>
<rect x="720" y="432" width="12" height="12" fill="#444448"/>
<rect x="732" y="432" width="12" height="12" fill="#7c7c7c"/>
<rect x="744" y="432" width="12" height="12" fill="#444448"/>
<rect x="756" y="432" width="12" height="12" fill="#8c8c8c"/>
<rect x="768" y="432" width="12" height="12" fill="#a4aca4"/>
<rect x="780" y="432" width="12" height="12" fill="#8c9488"/>
<rect x="792" y="432" width="12" height="12" fill="#467a3c"/>
<rect x="804" y="432" width="24" height="12" fill="#3f7628"/>
<rect x="828" y="432" width="12" height="12" fill="#8c9428"/>
<rect x="840" y="432" width="12" height="12" fill="#dcb82c"/>
<rect x="852" y="432" width="12" height="12" fill="#5a8028"/>
<rect x="864" y="432" width="84" height="12" fill="#4f7c28"/>
<rect x="948" y="432" width="12" height="12" fill="#6c8c2c"/>
<rect x="960" y="432" width="12" height="12" fill="#8c9c30"/>
<rect x="972" y="432" width="12" height="12" fill="#dcb82c"/>
<rect x="984" y="432" width="12" height="12" fill="#6c8a2c"/>
<rect x="996" y="432" width="36" height="12" fill="#437a2e"/>
<rect x="1032" y="432" width="12" height="12" fill="#a4b4a4"/>
<rect x="1044" y="432" width="36" height="12" fill="#ececec"/>
<rect x="396" y="444" width="12" height="12" fill="#dcdcdc"/>
<rect x="408" y="444" width="12" height="12" fill="#3a7228"/>
<rect x="420" y="444" width="12" height="12" fill="#7c8820"/>
<rect x="432" y="444" width="12" height="12" fill="#5cb020"/>
<rect x="444" y="444" width="36" height="12" fill="#3c7226"/>
<rect x="480" y="444" width="12" height="12" fill="#5e8844"/>
<rect x="492" y="444" width="60" height="12" fill="#8c9c5c"/>
<rect x="552" y="444" width="12" height="12" fill="#588640"/>
<rect x="564" y="444" width="48" height="12" fill="#3f7628"/>
<rect x="612" y="444" width="12" height="12" fill="#949468"/>
<rect x="624" y="444" width="12" height="12" fill="#8c9c70"/>
<rect x="636" y="444" width="12" height="12" fill="#7ca064"/>
<rect x="648" y="444" width="24" height="12" fill="#3f7628"/>
<rect x="672" y="444" width="12" height="12" fill="#4a7e40"/>
<rect x="684" y="444" width="12" height="12" fill="#b0b0b0"/>
<rect x="696" y="444" width="12" height="12" fill="#d0d0d0"/>
<rect x="708" y="444" width="12" height="12" fill="#c8c8c8"/>
<rect x="720" y="444" width="12" height="12" fill="#444448"/>
<rect x="732" y="444" width="12" height="12" fill="#a0a0a0"/>
<rect x="744" y="444" width="12" height="12" fill="#444448"/>
<rect x="756" y="444" width="12" height="12" fill="#b0b0b0"/>
<rect x="768" y="444" width="12" height="12" fill="#d4d4d4"/>
<rect x="780" y="444" width="12" height="12" fill="#c0c0c0"/>
<rect x="792" y="444" width="12" height="12" fill="#4f8044"/>
<rect x="804" y="444" width="24" height="12" fill="#3f7628"/>
<rect x="828" y="444" width="12" height="12" fill="#6c8830"/>
<rect x="840" y="444" width="12" height="12" fill="#848c28"/>
<rect x="852" y="444" width="12" height="12" fill="#4f7e28"/>
<rect x="864" y="444" width="96" height="12" fill="#3f7628"/>
<rect x="960" y="444" width="12" height="12" fill="#4a7c2c"/>
<rect x="972" y="444" width="12" height="12" fill="#7c9030"/>
<rect x="984" y="444" width="12" height="12" fill="#5a8634"/>
<rect x="996" y="444" width="12" height="12" fill="#4a8040"/>
<rect x="1008" y="444" width="12" height="12" fill="#5e8c50"/>
<rect x="1020" y="444" width="12" height="12" fill="#467a30"/>
<rect x="1032" y="444" width="12" height="12" fill="#aaa65c"/>
<rect x="1044" y="444" width="12" height="12" fill="#b4ac74"/>
<rect x="1056" y="444" width="12" height="12" fill="#c2ba7e"/>
<rect x="1068" y="444" width="12" height="12" fill="#c8c8a8"/>
<rect x="396" y="456" width="12" height="12" fill="#dcdcdc"/>
<rect x="408" y="456" width="12" height="12" fill="#4a7a24"/>
<rect x="420" y="456" width="12" height="12" fill="#bca880"/>
<rect x="432" y="456" width="12" height="12" fill="#c0a878"/>
<rect x="444" y="456" width="12" height="12" fill="#c86820"/>
<rect x="456" y="456" width="12" height="12" fill="#4f7224"/>
<rect x="468" y="456" width="12" height="12" fill="#5a7424"/>
<rect x="480" y="456" width="12" height="12" fill="#647828"/>
<rect x="492" y="456" width="60" height="12" fill="#5a8c50"/>
<rect x="552" y="456" width="36" height="12" fill="#3f7628"/>
<rect x="588" y="456" width="12" height="12" fill="#5a8c50"/>
<rect x="600" y="456" width="12" height="12" fill="#4a7e38"/>
<rect x="612" y="456" width="12" height="12" fill="#3f7628"/>
<rect x="624" y="456" width="12" height="12" fill="#6a9c5c"/>
<rect x="636" y="456" width="24" height="12" fill="#5a8c48"/>
<rect x="660" y="456" width="12" height="12" fill="#3f7628"/>
<rect x="672" y="456" width="12" height="12" fill="#4a7e40"/>
<rect x="684" y="456" width="12" height="12" fill="#b0b0b0"/>
<rect x="696" y="456" width="96" height="12" fill="#ececec"/>
<rect x="792" y="456" width="36" height="12" fill="#3f7628"/>
<rect x="828" y="456" width="168" height="12" fill="#54844a"/>
<rect x="996" y="456" width="12" height="12" fill="#4a7424"/>
<rect x="1008" y="456" width="12" height="12" fill="#3f7a30"/>
<rect x="1020" y="456" width="12" height="12" fill="#b8ac2e"/>
<rect x="1032" y="456" width="12" height="12" fill="#d0bc60"/>
<rect x="1044" y="456" width="12" height="12" fill="#e6e4dc"/>
<rect x="1056" y="456" width="12" height="12" fill="#d2b626"/>
<rect x="1068" y="456" width="12" height="12" fill="#bcb880"/>
<rect x="396" y="468" width="12" height="12" fill="#dcdcdc"/>
<rect x="408" y="468" width="12" height="12" fill="#3f7228"/>
<rect x="420" y="468" width="12" height="12" fill="#b8a04c"/>
<rect x="432" y="468" width="12" height="12" fill="#d8c068"/>
<rect x="444" y="468" width="12" height="12" fill="#5e8028"/>
<rect x="456" y="468" width="132" height="12" fill="#3f7628"/>
<rect x="588" y="468" width="12" height="12" fill="#5a8c50"/>
<rect x="600" y="468" width="12" height="12" fill="#4f8440"/>
<rect x="612" y="468" width="60" height="12" fill="#3f7628"/>
<rect x="672" y="468" width="12" height="12" fill="#4f8448"/>
<rect x="684" y="468" width="12" height="12" fill="#c0c0c0"/>
<rect x="696" y="468" width="96" height="12" fill="#ececec"/>
<rect x="792" y="468" width="36" height="12" fill="#3f7628"/>
<rect x="828" y="468" width="72" height="12" fill="#467c38"/>
<rect x="900" y="468" width="24" height="12" fill="#5a8a54"/>
<rect x="924" y="468" width="72" height="12" fill="#467c38"/>
<rect x="996" y="468" width="12" height="12" fill="#5c7424"/>
<rect x="1008" y="468" width="12" height="12" fill="#3f7a30"/>
<rect x="1020" y="468" width="12" height="12" fill="#bcac2a"/>
<rect x="1032" y="468" width="12" height="12" fill="#ceb844"/>
<rect x="1044" y="468" width="12" height="12" fill="#cec280"/>
<rect x="1056" y="468" width="12" height="12" fill="#d2b626"/>
<rect x="1068" y="468" width="12" height="12" fill="#bcb884"/>
<rect x="396" y="480" width="12" height="12" fill="#d8d8d8"/>
<rect x="408" y="480" width="12" height="12" fill="#386e34"/>
<rect x="420" y="480" width="168" height="12" fill="#3f7628"/>
<rect x="588" y="480" width="12" height="12" fill="#5a8a48"/>
<rect x="600" y="480" width="12" height="12" fill="#3a7422"/>
<rect x="612" y="480" width="12" height="12" fill="#4a7e34"/>
<rect x="624" y="480" width="48" height="12" fill="#3f7628"/>
<rect x="672" y="480" width="12" height="12" fill="#5a8c54"/>
<rect x="684" y="480" width="12" height="12" fill="#d4d4d4"/>
<rect x="696" y="480" width="96" height="12" fill="#ececec"/>
<rect x="792" y="480" width="36" height="12" fill="#3f7628"/>
<rect x="828" y="480" width="12" height="12" fill="#3a7428"/>
<rect x="840" y="480" width="12" height="12" fill="#7c8c28"/>
<rect x="852" y="480" width="156" height="12" fill="#848c24"/>
<rect x="1008" y="480" width="12" height="12" fill="#a8a430"/>
<rect x="1020" y="480" width="48" height="12" fill="#d2b622"/>
<rect x="1068" y="480" width="12" height="12" fill="#bcb888"/>
<rect x="408" y="492" width="12" height="12" fill="#b4c0b4"/>
<rect x="420" y="492" width="252" height="12" fill="#a6b6a6"/>
<rect x="672" y="492" width="12" height="12" fill="#b4c0b4"/>
<rect x="684" y="492" width="120" height="12" fill="#e8e8e8"/>
<rect x="804" y="492" width="36" height="12" fill="#a6b6a6"/>
<rect x="840" y="492" width="228" height="12" fill="#d3cba5"/>
<rect x="1068" y="492" width="12" height="12" fill="#dcb098"/>
<rect x="1080" y="492" width="12" height="12" fill="#e0b494"/>
<g shape-rendering="auto">
<rect x="873.500" y="240" width="122.500" height="104" fill="#42792d"/>
<rect x="873.500" y="240" width="122.500" height="10" fill="#467c30"/>
<rect x="876" y="344" width="12" height="4" fill="#437a2e"/><rect x="888" y="344" width="24" height="4" fill="#6a6828"/><rect x="912" y="344" width="36" height="4" fill="#b07434"/><rect x="948" y="344" width="12" height="4" fill="#c89070"/><rect x="960" y="344" width="24" height="4" fill="#d8583a"/><rect x="984" y="344" width="12" height="4" fill="#4a8038"/>
<rect x="907.600" y="271.400" width="57.400" height="58.600" fill="#5f5d63"/>
<rect x="936" y="311.500" width="12" height="12" fill="#646268"/>
<rect x="924.200" y="288" width="11.900" height="23.500" fill="#8b8b8d"/><rect x="936.100" y="288" width="11.900" height="23.500" fill="#98989a"/><rect x="936.100" y="288" width="11.900" height="11" fill="#9c9c9e"/>
<ellipse cx="940" cy="325.400" rx="12" ry="1.700" fill="#827a62"/>
<rect x="928" y="274.600" width="15.500" height=".9" fill="#8c8c8c"/>
<circle cx="913" cy="325.500" r="1" fill="#f4f4f4"/>
<rect x="916.60" y="263.2" width="1.6" height="8.2" fill="#dcb24a"/>
<rect x="913.90" y="331" width="1.7" height="9.6" fill="#dcb24a"/>
<rect x="897.2" y="278.30" width="10.2" height="1.8" fill="#dcb24a"/>
<rect x="966.8" y="278.30" width="8.2" height="1.8" fill="#dcb24a"/>
<rect x="919.36" y="263.2" width="1.6" height="8.2" fill="#dcb24a"/>
<rect x="916.84" y="331" width="1.7" height="9.6" fill="#dcb24a"/>
<rect x="897.2" y="281.30" width="10.2" height="1.8" fill="#dcb24a"/>
<rect x="966.8" y="281.30" width="8.2" height="1.8" fill="#dcb24a"/>
<rect x="922.12" y="263.2" width="1.6" height="8.2" fill="#dcb24a"/>
<rect x="919.78" y="331" width="1.7" height="9.6" fill="#dcb24a"/>
<rect x="897.2" y="284.30" width="10.2" height="1.8" fill="#dcb24a"/>
<rect x="966.8" y="284.30" width="8.2" height="1.8" fill="#dcb24a"/>
<rect x="924.88" y="263.2" width="1.6" height="8.2" fill="#dcb24a"/>
<rect x="922.72" y="331" width="1.7" height="9.6" fill="#dcb24a"/>
<rect x="897.2" y="287.30" width="10.2" height="1.8" fill="#dcb24a"/>
<rect x="966.8" y="287.30" width="8.2" height="1.8" fill="#dcb24a"/>
<rect x="927.64" y="263.2" width="1.6" height="8.2" fill="#dcb24a"/>
<rect x="925.66" y="331" width="1.7" height="9.6" fill="#dcb24a"/>
<rect x="897.2" y="290.30" width="10.2" height="1.8" fill="#dcb24a"/>
<rect x="966.8" y="290.30" width="8.2" height="1.8" fill="#dcb24a"/>
<rect x="930.40" y="263.2" width="1.6" height="8.2" fill="#dcb24a"/>
<rect x="928.60" y="331" width="1.7" height="9.6" fill="#dcb24a"/>
<rect x="897.2" y="293.30" width="10.2" height="1.8" fill="#dcb24a"/>
<rect x="966.8" y="293.30" width="8.2" height="1.8" fill="#dcb24a"/>
<rect x="933.16" y="263.2" width="1.6" height="8.2" fill="#dcb24a"/>
<rect x="931.54" y="331" width="1.7" height="9.6" fill="#dcb24a"/>
<rect x="897.2" y="296.30" width="10.2" height="1.8" fill="#dcb24a"/>
<rect x="966.8" y="296.30" width="8.2" height="1.8" fill="#dcb24a"/>
<rect x="935.92" y="263.2" width="1.6" height="8.2" fill="#dcb24a"/>
<rect x="934.48" y="331" width="1.7" height="9.6" fill="#dcb24a"/>
<rect x="897.2" y="299.30" width="10.2" height="1.8" fill="#dcb24a"/>
<rect x="966.8" y="299.30" width="8.2" height="1.8" fill="#dcb24a"/>
<rect x="938.68" y="263.2" width="1.6" height="8.2" fill="#dcb24a"/>
<rect x="937.42" y="331" width="1.7" height="9.6" fill="#dcb24a"/>
<rect x="897.2" y="302.30" width="10.2" height="1.8" fill="#dcb24a"/>
<rect x="966.8" y="302.30" width="8.2" height="1.8" fill="#dcb24a"/>
<rect x="941.44" y="263.2" width="1.6" height="8.2" fill="#dcb24a"/>
<rect x="940.36" y="331" width="1.7" height="9.6" fill="#dcb24a"/>
<rect x="897.2" y="305.30" width="10.2" height="1.8" fill="#dcb24a"/>
<rect x="966.8" y="305.30" width="8.2" height="1.8" fill="#dcb24a"/>
<rect x="944.20" y="263.2" width="1.6" height="8.2" fill="#dcb24a"/>
<rect x="943.30" y="331" width="1.7" height="9.6" fill="#dcb24a"/>
<rect x="897.2" y="308.30" width="10.2" height="1.8" fill="#dcb24a"/>
<rect x="966.8" y="308.30" width="8.2" height="1.8" fill="#dcb24a"/>
<rect x="946.96" y="263.2" width="1.6" height="8.2" fill="#dcb24a"/>
<rect x="946.24" y="331" width="1.7" height="9.6" fill="#dcb24a"/>
<rect x="897.2" y="311.30" width="10.2" height="1.8" fill="#dcb24a"/>
<rect x="966.8" y="311.30" width="8.2" height="1.8" fill="#dcb24a"/>
<rect x="949.72" y="263.2" width="1.6" height="8.2" fill="#dcb24a"/>
<rect x="949.18" y="331" width="1.7" height="9.6" fill="#dcb24a"/>
<rect x="897.2" y="314.30" width="10.2" height="1.8" fill="#dcb24a"/>
<rect x="966.8" y="314.30" width="8.2" height="1.8" fill="#dcb24a"/>
<rect x="952.48" y="263.2" width="1.6" height="8.2" fill="#dcb24a"/>
<rect x="952.12" y="331" width="1.7" height="9.6" fill="#dcb24a"/>
<rect x="897.2" y="317.30" width="10.2" height="1.8" fill="#dcb24a"/>
<rect x="966.8" y="317.30" width="8.2" height="1.8" fill="#dcb24a"/>
<rect x="955.24" y="263.2" width="1.6" height="8.2" fill="#dcb24a"/>
<rect x="955.06" y="331" width="1.7" height="9.6" fill="#dcb24a"/>
<rect x="897.2" y="320.30" width="10.2" height="1.8" fill="#dcb24a"/>
<rect x="966.8" y="320.30" width="8.2" height="1.8" fill="#dcb24a"/>
<rect x="958.00" y="263.2" width="1.6" height="8.2" fill="#dcb24a"/>
<rect x="958.00" y="331" width="1.7" height="9.6" fill="#dcb24a"/>
<rect x="897.2" y="323.30" width="10.2" height="1.8" fill="#dcb24a"/>
<rect x="966.8" y="323.30" width="8.2" height="1.8" fill="#dcb24a"/>
<rect x="916" y="266" width="44" height="2.500" fill="#f0d890" opacity=".35"/><rect x="913.500" y="334" width="47" height="3" fill="#f0d890" opacity=".35"/>
<rect x="900.500" y="278" width="3" height="47" fill="#f4dc98" opacity=".35"/><rect x="969.500" y="278" width="3" height="47" fill="#f4dc98" opacity=".35"/>
<rect x="925.300" y="259.500" width=".8" height="1.500" fill="#e8e8d8"/><rect x="955" y="259.500" width=".8" height="1.500" fill="#e8e8d8"/><rect x="940.500" y="259.800" width=".6" height="1" fill="#c8d8b8"/>
<text x="900" y="271.600" font-family="Liberation Sans,sans-serif" font-size="5.500" fill="#e8f0e8">U1</text>
<text x="985" y="247" font-family="Liberation Sans,sans-serif" font-size="6" fill="#d4c040">C</text>
<path d="M890 272.5h-8.800v18.7h8.800" fill="none" stroke="#f0f0e8" stroke-width=".9"/>
<rect x="883.800" y="273.7" width="6" height="3.300" fill="#c8b040"/><rect x="883.800" y="286.7" width="6" height="3.300" fill="#c8b040"/>
<rect x="884.500" y="279.1" width="4.500" height="4" fill="#3a2c2c"/><rect x="885.200" y="279.8" width="3.200" height="2.600" fill="#c8c8d8"/>
<path d="M890 293.3h-8.800v18.7h8.800" fill="none" stroke="#f0f0e8" stroke-width=".9"/>
<rect x="883.800" y="294.5" width="6" height="3.300" fill="#c8b040"/><rect x="883.800" y="307.5" width="6" height="3.300" fill="#c8b040"/>
<rect x="884.500" y="299.9" width="4.500" height="4" fill="#3a2c2c"/><rect x="885.200" y="300.6" width="3.200" height="2.600" fill="#c8c8d8"/>
<path d="M890 314.9h-8.800v18.7h8.800" fill="none" stroke="#f0f0e8" stroke-width=".9"/>
<rect x="883.800" y="316.1" width="6" height="3.300" fill="#c8b040"/><rect x="883.800" y="329.1" width="6" height="3.300" fill="#c8b040"/>
<rect x="884.500" y="321.5" width="4.500" height="4" fill="#3a2c2c"/><rect x="885.200" y="322.2" width="3.200" height="2.600" fill="#c8c8d8"/>
<text transform="translate(880.600,291.500) rotate(-90)" font-family="Liberation Sans,sans-serif" font-size="5.500" fill="#f0f0e8">S?</text>
<text transform="translate(880.600,311) rotate(-90)" font-family="Liberation Sans,sans-serif" font-size="5.500" fill="#f0f0e8">Q12</text>
<text transform="translate(880.600,331) rotate(-90)" font-family="Liberation Sans,sans-serif" font-size="5.500" fill="#f0f0e8">S?</text>
<text x="982.800" y="276" font-family="Liberation Sans,sans-serif" font-size="5" fill="#f0f0e8">R1</text>
<rect x="983" y="279.600" width="4.500" height="3.300" fill="#c8b040"/><rect x="983" y="284.800" width="4.500" height="5.500" fill="#d0d0d0"/><rect x="983" y="284.200" width="4.500" height="1.200" fill="#3a2c2c"/><rect x="983" y="292.800" width="5" height="3.300" fill="#c8b040"/>
<circle cx="985.300" cy="302.700" r="1.500" fill="#f0f0f0"/><rect x="976" y="302" width="3" height="1.800" fill="#e8e8e8"/>
<path d="M982.800 305.300h7.200v17.800h-7.200" fill="none" stroke="#f0f0e8" stroke-width=".9"/>
<rect x="982.800" y="306.600" width="5" height="3.800" fill="#c8b040"/><rect x="983.300" y="313" width="4.500" height="4.800" fill="#c8c8c8"/><rect x="983.300" y="312.300" width="4.500" height="1" fill="#3a2c2c"/><rect x="983.300" y="317.800" width="4.500" height="1" fill="#3a2c2c"/><rect x="982.800" y="320" width="6" height="3" fill="#c8b040"/>
<text x="982.800" y="331.500" font-family="Liberation Sans,sans-serif" font-size="5.500" fill="#f0f0e8">D3</text>
<rect x="993.800" y="337.500" width="2" height="8.900" fill="#f0f0e0"/>
<path d="M867.300 241.500L885 256.500" stroke="#e82a1c" stroke-width="3.600" fill="none"/><path d="M879.600 256.600L889.800 251L891 261Z" fill="#e82a1c"/>
<path d="M890.800 345.200V250.900H980.900V345.200H944" fill="none" stroke="#e8281c" stroke-width="2.600"/>
<rect x="895.200" y="257.300" width="19.600" height="23.400" fill="none" stroke="#e8281c" stroke-width="2.500"/>
<rect x="921.800" y="247.300" width="18.800" height="9.800" fill="none" stroke="#f0f0e0" stroke-width=".9"/>
<rect x="923" y="250" width="3" height="4.500" fill="#c8b040"/><rect x="935.500" y="250" width="4" height="4.500" fill="#c8a838"/><rect x="927.500" y="250.300" width="7.500" height="4" fill="#4a3c30"/><rect x="928.500" y="251.500" width="5" height="1.600" fill="#d8d8d0"/>
<text x="942" y="255" font-family="Liberation Sans,sans-serif" font-size="4.500" fill="#f0f0f0">R2</text>
</g>
<defs><linearGradient id="cg" x1="0" x2="1"><stop offset="0" stop-color="#e6e6e6"/><stop offset=".8" stop-color="#e4e4e4"/><stop offset=".93" stop-color="#c4c4c6"/><stop offset="1" stop-color="#a4a4a8"/></linearGradient>
<radialGradient id="pk" cx=".45" cy=".5" r=".6"><stop offset="0" stop-color="#d4a4cc"/><stop offset=".55" stop-color="#dca49c"/><stop offset="1" stop-color="#dca090"/></radialGradient></defs>
<g shape-rendering="auto">
<rect x="708" y="455.500" width="88" height="40" fill="url(#cg)"/>
<rect x="696" y="456" width="12" height="40" fill="#e2e2e2"/>
<path d="M684 504L692 496H798L806 504Z" fill="#ececec"/>
<rect x="692" y="494.800" width="104" height="1.300" fill="#c6c6c6"/>
<rect x="796" y="456" width="9" height="40" fill="#3f7628"/><rect x="796" y="493" width="9" height="3" fill="#2f6a24"/>
<path d="M720 455h12v5h2.200l-1.300 15.800h-14.500l-1.400-15.800h3z" fill="#3e3e42"/>
<path d="M744 455h12v2.400h4l-1 14.600h-14.800l-1.200-14.600h1z" fill="#3e3e42"/>
<path d="M716.500 460l1.400 16.500h15.200l1.400-16.500" fill="none" stroke="#f8f8f8" stroke-width="1" opacity=".8"/><path d="M742.500 457.500l1.200 15.200h15.600l1.200-15.200" fill="none" stroke="#f8f8f8" stroke-width="1" opacity=".8"/>
<rect x="1068" y="504" width="12" height="8.500" fill="#e0b49c"/><path d="M1069.400 512L1082 504H1095.700L1108.300 515L1083 513.500Z" fill="#c8a62a"/>
<path d="M1069.400 512L1083 513.500L1096 509L1088 506Z" fill="#d08c3c"/>
<circle cx="1142" cy="528.300" r="10.600" fill="url(#pk)"/>
<path d="M1110.400 516L1137.700 517.600L1142 517.700L1133 537.200Z" fill="#d4986c"/>
<path d="M1110.400 516L1140 517.600L1134 520.500L1126 523.500Z" fill="#c8a42c"/>
<circle cx="1142.500" cy="528.500" r="8.500" fill="url(#pk)"/>
<circle cx="1142" cy="528.300" r="10.800" fill="none" stroke="#ecd8b0" stroke-width=".8" opacity=".8"/>
<path d="M931 392a3 3 0 1 0 4 4" fill="none" stroke="#c8a838" stroke-width="1.300"/><path d="M951 396a3 3 0 0 0 6 0" fill="none" stroke="#c8a838" stroke-width="1.300"/>
<path d="M1069.500 161.500L1076 169.500L1071 166.800Z" fill="#2f4a38"/><path d="M992 156h27v4.200l-11-1.200z" fill="#fbfbfb"/><rect x="488" y="156" width="20" height="1" fill="#f4f6f4"/><ellipse cx="640.300" cy="212.300" rx="1" ry="2" fill="#d8f0c8"/><path d="M654 196.500L643.500 209" stroke="#3a5a30" stroke-width="1.200" fill="none"/><rect x="809.500" y="240.700" width="7.500" height="1.600" fill="#f0f4e8"/><path d="M691.500 298.500l1.500 5 1.200-3.500" stroke="#eef4e4" stroke-width=".9" fill="none"/><path d="M688 300l3 4.500h-4.500z" fill="#2f5a28"/><rect x="812" y="291" width="2.500" height="13" fill="#3a6a24"/><rect x="817" y="291" width="2.500" height="13" fill="#3a6a24"/><rect x="815.600" y="290" width=".8" height="14" fill="#d8e8c8"/><rect x="1020" y="144" width="12" height="12" fill="#fbf8ea"/>
</g>

</svg>
</div>
<!-- HUD -->
<div id="hud" class="abs">
 <span class="y1" style="left:2.500px;top:4px;white-space:pre;transform:scaleX(0.9881)">x:  4470.000   dx:  1775.000  mil</span>
 <span class="y1" style="left:2.500px;top:14px;white-space:pre;transform:scaleX(1.0192)">y:  -335.000   dy:  -925.000  mil</span>
 <span class="y2" style="left:3px;top:24.500px;transform:scaleX(1.1290)">Snap: 5mil</span>
 <span class="w" style="left:3px;top:32px;transform:scaleX(0.9229)">Shift + H</span><span class="w" style="left:36px;top:32px;transform:scaleX(0.9995)">Toggle Heads Up Display</span>
 <span class="w" style="left:3px;top:40px;transform:scaleX(0.9271)">Shift + G</span><span class="w" style="left:36px;top:40px;transform:scaleX(1.0209)">Toggle Heads Up Tracking</span>
 <span class="w" style="left:3px;top:48px;transform:scaleX(0.9397)">Shift + D</span><span class="w" style="left:36px;top:48px;transform:scaleX(1.0006)">Toggle Heads Up Delta Origin Display</span>
 <span class="w" style="left:3px;top:56px;transform:scaleX(0.9801)">Shift + M</span><span class="w" style="left:36px;top:56px;transform:scaleX(1.0330)">Toggle Board Insight Lens</span>
</div>
<!-- SCROLLBARS -->
<div id="vscroll" class="abs">
 <svg style="left:2px;top:3.500px" width="8" height="6" viewBox="0 0 8 6"><path d="M1 4.500l3-3 3 3" fill="none" stroke="#444" stroke-width="1.300"/></svg>
 <div style="left:1px;top:478px;width:10px;height:11px;background:#cdcdcd"></div>
 <svg style="left:2px;top:536.500px" width="8" height="6" viewBox="0 0 8 6"><path d="M1 1.500l3 3 3-3" fill="none" stroke="#444" stroke-width="1.300"/></svg>
</div>
<div id="hscroll" class="abs">
 <svg style="left:2.500px;top:2.500px" width="6" height="8" viewBox="0 0 6 8"><path d="M4.500 1l-3 3 3 3" fill="none" stroke="#444" stroke-width="1.300"/></svg>
 <div style="left:161px;top:1px;width:12px;height:10px;background:#cdcdcd"></div>
 <svg style="left:1053px;top:2.500px" width="6" height="8" viewBox="0 0 6 8"><path d="M1.500 1l3 3-3 3" fill="none" stroke="#444" stroke-width="1.300"/></svg>
</div>
<!-- LAYER TABS -->
<div id="layers" class="abs">
 <div style="left:0;top:0;width:445px;height:12px;background:#fbfbfb"></div>
 <div style="left:2px;top:1.500px;width:16px;height:9px;background:#f20a0a;border:1px solid #c00"></div>
 <div style="left:18px;top:1.500px;width:14px;height:9px;background:#f4f4f4;border:1px solid #9a9a9a"></div>
 <span style="left:21px;top:3px;font-size:7.500px;color:#8a8a8a">LS</span>
 <svg style="left:0;top:0" width="450" height="13" viewBox="0 0 450 13"><g fill="none" stroke="#555" stroke-width=".8">
  <path d="M35 0l3.500 12"/><path d="M93 0l-3.500 12"/><path d="M129.500 0l-3 12"/><path d="M167 0l-3 12"/><path d="M222 0l-3 12"/><path d="M274.500 0l-3 12"/><path d="M337 0l-3 12"/><path d="M385.500 0l-3 12"/><path d="M445 0l-3 12"/></g></svg>
 <i style="left:41.500px;background:#e81414"></i><span style="left:51.300px;font-weight:bold;color:#111;font-size:8.200px;transform:scaleX(0.9434)">TopLayer</span>
 <i style="left:95.500px;background:#1a7a22"></i><span style="left:105px;transform:scaleX(0.8550)">2-GND</span>
 <i style="left:134px;background:#7a1010"></i><span style="left:143.300px;transform:scaleX(0.8317)">3-VCC</span>
 <i style="left:170.200px;background:#1414e8"></i><span style="left:179.700px;transform:scaleX(0.8670)">BottomLayer</span>
 <i style="left:225.800px;background:#f4ee2a;outline:1px solid #b8b23a;outline-offset:-1px"></i><span style="left:235px;transform:scaleX(0.9018)">TopOverlay</span>
 <i style="left:278px;background:#80801a"></i><span style="left:287.800px;transform:scaleX(0.8661)">BottomOverlay</span>
 <i style="left:340.400px;background:#7a107a"></i><span style="left:349.800px;transform:scaleX(0.9062)">TopSolder</span>
 <i style="left:388.800px;background:#e81ae0"></i><span style="left:398.700px;transform:scaleX(0.8722)">BottomSolder</span>
 <!-- right buttons -->
 <span style="left:986.500px;top:2px;font-size:8px;color:#9aa832">8</span>
 <div style="left:992px;top:3.500px;width:0;height:0;border-left:3.500px solid #444;border-top:2.500px solid transparent;border-bottom:2.500px solid transparent"></div>
 <svg style="left:995.500px;top:3px" width="8" height="7" viewBox="0 0 8 7"><path d="M.6 .8h6.800l-3.400 5z" fill="#8a8a8a" stroke="#333" stroke-width="1"/></svg>
 <div class="vl" style="left:1007px;top:1px;height:11px;background:#d0d0d0"></div>
 <span style="left:1009.800px;color:#555;transform:scaleX(0.9218)">Mask Level</span>
 <div class="vl" style="left:1049.800px;top:1px;height:11px;background:#d0d0d0"></div>
 <span style="left:1052.800px;color:#555;transform:scaleX(0.8060)">Clear</span>
</div>
<!-- STATUS -->
<div id="status" class="abs">
 <span style="left:3px;top:3px;white-space:pre;transform:scaleX(0.8579)">X:4470mil Y:-335mil    Grid:5mil</span>
 <span style="left:3.500px;top:17.500px;transform:scaleX(0.8618)">Idle state - ready for command</span>
 <div class="vl" style="left:320px;top:2px;height:11px;background:#a8a8a8"></div>
 <div class="vl" style="left:640.500px;top:2px;height:11px;background:#c4c4c4"></div>
 <div class="sbtn" style="left:1057px;width:30.500px"><span style="left:3.500px;top:1px;color:#444;transform:scaleX(0.8618)"><u>S</u>ystem</span></div>
 <div class="sbtn" style="left:1087px;width:61px"><span style="left:5.500px;top:1px;color:#444;transform:scaleX(0.8573)"><u>D</u>esign Compiler</span></div>
 <div class="sbtn" style="left:1147.500px;width:28.500px"><span style="left:7px;top:1px;color:#666;transform:scaleX(0.8084)">Help</span></div>
 <div class="sbtn" style="left:1175.500px;width:46px"><span style="left:5.500px;top:1px;color:#8a8a8a;transform:scaleX(0.7656)">Instruments</span></div>
 <div class="sbtn" style="left:1221px;width:29px"><span style="left:7px;top:1px;color:#777;transform:scaleX(0.8509)">PCB</span></div>
 <div class="sbtn" style="left:1253px;width:11px"><span style="left:1px;top:1px;color:#b4b4b4;font-size:7.500px">&gt;&gt;</span></div>
 <span id="wm" style="left:1158px;top:6.300px;font-size:12.300px;color:#626262;text-shadow:0 0 1px #fff,0 0 1px #fff;transform:scaleX(0.9814)">CSDN @Micah.X</span>
</div>
</body></html>
